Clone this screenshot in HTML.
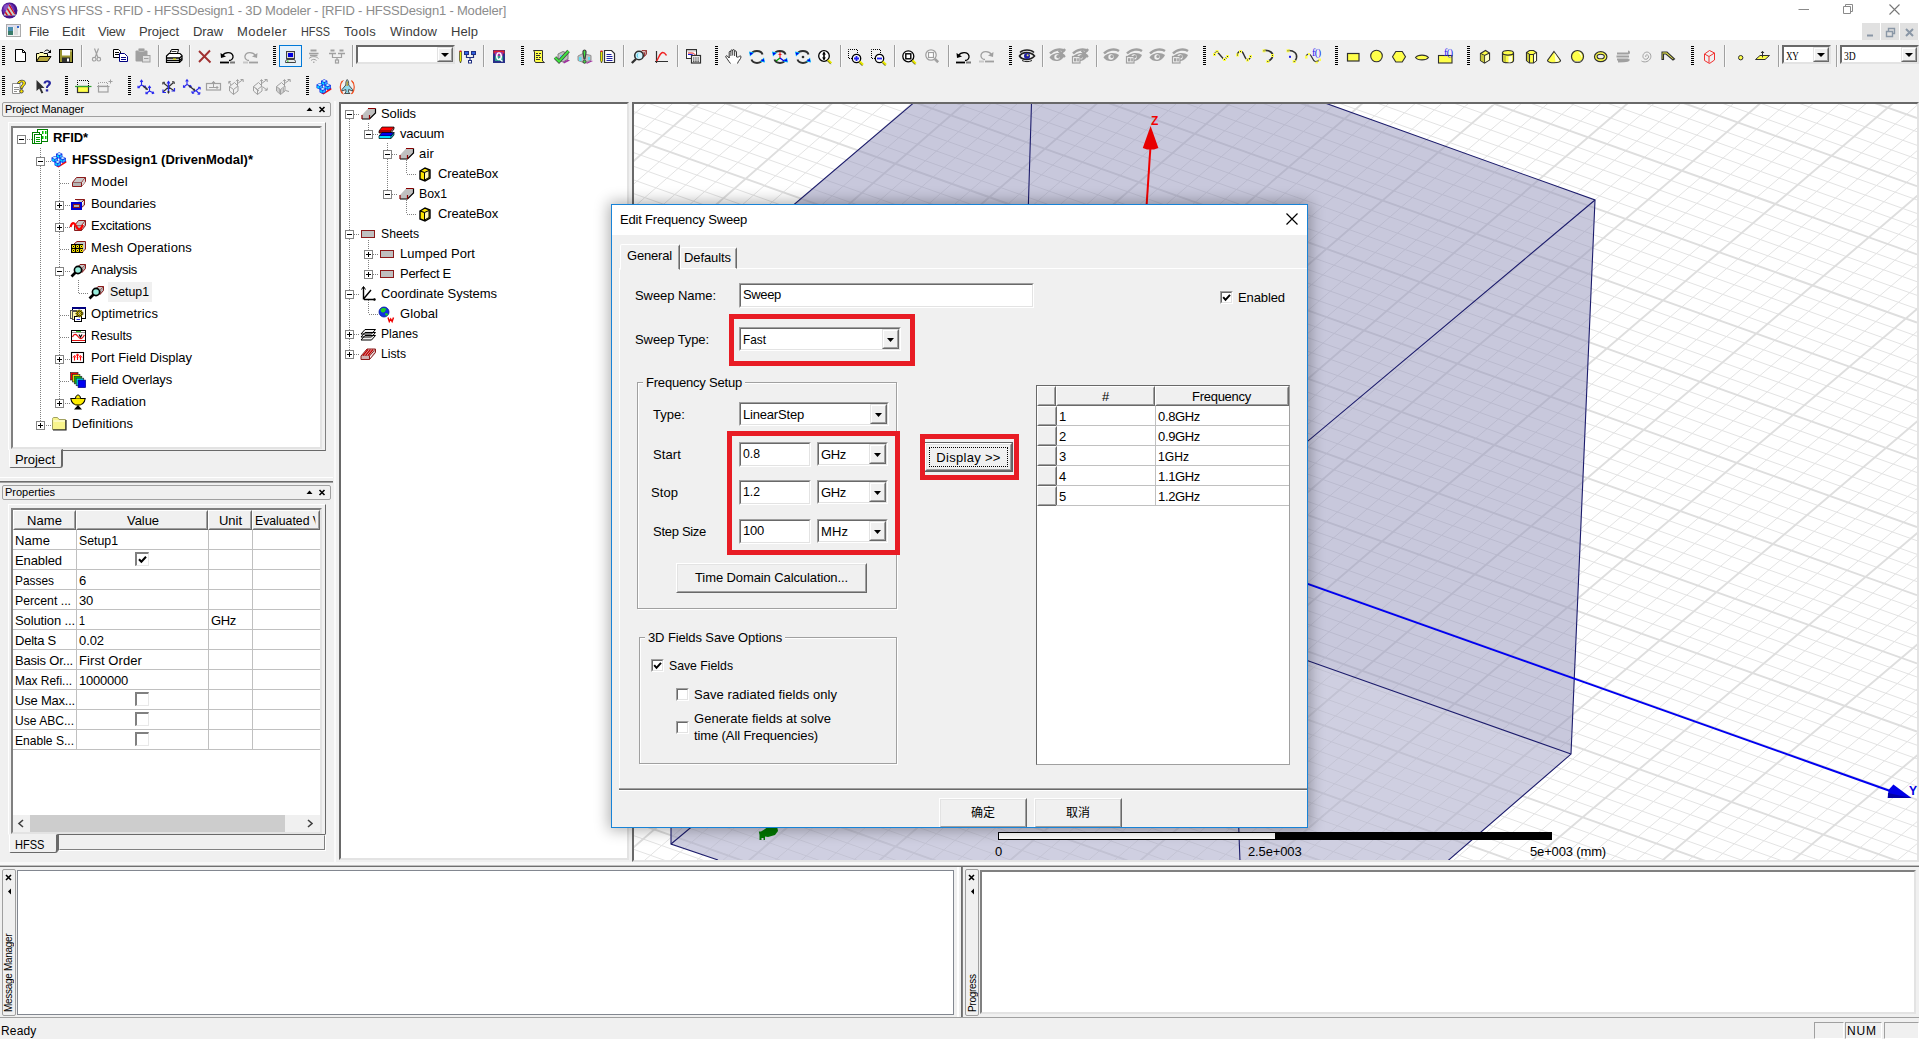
<!DOCTYPE html>
<html><head><meta charset="utf-8"><title>ANSYS HFSS</title><style>
html,body{margin:0;padding:0;}
body{width:1919px;height:1039px;position:relative;overflow:hidden;background:#f0f0f0;font-family:"Liberation Sans","Noto Sans CJK SC",sans-serif;font-size:13px;color:#000;}
div,svg{position:absolute;box-sizing:border-box;}
.t{white-space:nowrap;line-height:16px;}
.grip{width:3px;background:repeating-linear-gradient(to bottom,#000 0,#000 1px,transparent 1px,transparent 2px);}
.sep{width:1px;background:#a0a0a0;}
.sunk{border:1px solid;border-color:#a0a0a0 #fff #fff #a0a0a0;background:#fff;}
.sunk2{border:1px solid;border-color:#696969 #e3e3e3 #e3e3e3 #696969;}
.btn{border:1px solid;border-color:#fff #696969 #696969 #fff;background:#f0f0f0;}
.btn2{border:1px solid;border-color:#e3e3e3 #a0a0a0 #a0a0a0 #e3e3e3;}
</style></head><body>
<div style="left:0px;top:0px;width:1919px;height:22px;background:#fff;"></div>
<svg style="left:1px;top:2px;" width="17" height="17" viewBox="0 0 17 17"><defs><clipPath id="lg"><path d="M8.7 2L15 13.5H2.5Z"/></clipPath></defs><circle cx="8.5" cy="8.5" r="8" fill="#46148c"/><circle cx="7.6" cy="7.2" r="6" fill="#6a2eb0"/><circle cx="6.2" cy="5.6" r="3.2" fill="#9460cc" opacity=".7"/>
<g clip-path="url(#lg)"><rect x="0" y="0" width="17" height="17" fill="#c4d4cc"/><path d="M1 5L8 16 M4 3L11 14 M7 1L14 12 M10 0L17 11" stroke="#d81020" stroke-width="1.5" fill="none"/></g></svg>
<div class="t" style="left:22px;top:2px;line-height:18px;color:#8c8c8c;letter-spacing:-0.187px;">ANSYS HFSS - RFID - HFSSDesign1 - 3D Modeler - [RFID - HFSSDesign1 - Modeler]</div>
<svg style="left:1790px;top:0px;" width="129" height="22" viewBox="0 0 129 22"><path d="M8.5 9.5H19" stroke="#8a8a8a" stroke-width="1"/>
<path d="M53.5 6.5h7v7h-7z M55.5 6.5v-2h7v7h-2" stroke="#8a8a8a" fill="none" stroke-width="1"/>
<path d="M99.5 4.5l10 10M109.5 4.5l-10 10" stroke="#777" stroke-width="1.1"/></svg>
<div style="left:0px;top:22px;width:1919px;height:18px;background:#fff;"></div>
<svg style="left:6px;top:24px;" width="15" height="14" viewBox="0 0 15 14"><rect x="0.5" y="0.5" width="14" height="12" fill="#f4f4f4" stroke="#aaa"/><rect x="1" y="1" width="13" height="2" fill="#dde"/><rect x="2" y="3" width="5" height="8" fill="#3a7d6a"/><rect x="2" y="3" width="5" height="4" fill="#4a8fb0"/><rect x="8" y="3" width="4" height="8" fill="#ddd"/><rect x="11" y="2" width="2" height="2" fill="#36c"/></svg>
<div class="t" style="left:29px;top:23px;line-height:17px;color:#3c3c3c;letter-spacing:-0.237px;">File</div>
<div class="t" style="left:62px;top:23px;line-height:17px;color:#3c3c3c;letter-spacing:0.150px;">Edit</div>
<div class="t" style="left:98px;top:23px;line-height:17px;color:#3c3c3c;letter-spacing:-0.235px;">View</div>
<div class="t" style="left:139px;top:23px;line-height:17px;color:#3c3c3c;letter-spacing:-0.065px;">Project</div>
<div class="t" style="left:193px;top:23px;line-height:17px;color:#3c3c3c;letter-spacing:-0.084px;">Draw</div>
<div class="t" style="left:237px;top:23px;line-height:17px;color:#3c3c3c;letter-spacing:0.434px;">Modeler</div>
<div class="t" style="left:301px;top:23px;line-height:17px;color:#3c3c3c;transform:scaleX(0.8364);transform-origin:0 0;">HFSS</div>
<div class="t" style="left:344px;top:23px;line-height:17px;color:#3c3c3c;letter-spacing:0.331px;">Tools</div>
<div class="t" style="left:390px;top:23px;line-height:17px;color:#3c3c3c;letter-spacing:0.127px;">Window</div>
<div class="t" style="left:451px;top:23px;line-height:17px;color:#3c3c3c;letter-spacing:0.066px;">Help</div>
<div style="left:1862px;top:23px;width:18px;height:18px;background:#e1e1e1;"></div>
<div style="left:1881px;top:23px;width:18px;height:18px;background:#e1e1e1;"></div>
<div style="left:1900px;top:23px;width:18px;height:18px;background:#e1e1e1;"></div>
<svg style="left:1862px;top:23px;" width="56" height="18" viewBox="0 0 56 18"><path d="M5 12.5h6" stroke="#8a97a6" stroke-width="2"/>
<path d="M24.5 8.5h6v5h-6z M26.5 8v-2.5h6v5h-2" stroke="#8a97a6" fill="none" stroke-width="1.4"/>
<path d="M44 6l7 7M51 6l-7 7" stroke="#8a97a6" stroke-width="2"/></svg>
<div style="left:0px;top:40px;width:1919px;height:62px;background:#f0f0f0;"></div>
<div class="grip" style="left:2px;top:46px;width:3px;height:20px;"></div>
<svg style="left:15px;top:49px;overflow:visible;" width="12" height="14" viewBox="0 0 12 14"><path d="M0.5 0.5H7.5L10.5 3.5V12.5H0.5Z" fill="#fff" stroke="#000"/><path d="M7.5 0.5V3.5H10.5" fill="none" stroke="#000"/></svg>
<svg style="left:36px;top:49px;overflow:visible;" width="16" height="14" viewBox="0 0 16 14"><path d="M0.5 12.5V4.5H3L4 3.5H7L8 4.5H11.5V7.5" fill="#fffbb0" stroke="#000"/><path d="M0.5 12.5L3.5 7.5H15L11.5 12.5Z" fill="#b8a83c" stroke="#000"/><path d="M8.5 2.5C10 0.5 12.5 0.5 14 3" fill="none" stroke="#000"/><path d="M15 0.5V4H11.5Z" fill="#000"/></svg>
<svg style="left:59px;top:49px;overflow:visible;" width="15" height="15" viewBox="0 0 15 15"><rect x="0.5" y="0.5" width="13" height="13" fill="#9c9632" stroke="#000"/><rect x="3" y="1" width="8" height="5.5" fill="#fff"/><rect x="3" y="8.5" width="8" height="5" fill="#303030"/><rect x="8" y="9.5" width="2" height="3" fill="#fff"/><rect x="11.5" y="1.5" width="1" height="1" fill="#fff"/></svg>
<div class="sep" style="left:81px;top:45px;width:1px;height:22px;"></div>
<div style="left:82px;top:45px;width:1px;height:22px;background:#fff;opacity:.6;"></div>
<svg style="left:92px;top:48px;overflow:visible;" width="10" height="15" viewBox="0 0 10 15"><path d="M2.5 0.5L5.7 9M6.5 0.5L3.3 9" stroke="#a0a0a0" stroke-width="1.2" fill="none"/><circle cx="2.2" cy="11.2" r="1.8" fill="none" stroke="#a0a0a0" stroke-width="1.2"/><circle cx="6.8" cy="11.2" r="1.8" fill="none" stroke="#a0a0a0" stroke-width="1.2"/></svg>
<svg style="left:113px;top:49px;overflow:visible;" width="16" height="14" viewBox="0 0 16 14"><path d="M0.5 0.5H5.5L7.5 2.5V8.5H0.5Z" fill="#fff" stroke="#000"/><path d="M2 3.5h4M2 5.5h4" stroke="#000"/><path d="M6.5 4.5H11.5L14.5 7.5V12.5H6.5Z" fill="#fff" stroke="#000080"/><path d="M8 8.5h5M8 10.5h5" stroke="#000080"/></svg>
<svg style="left:135px;top:48px;overflow:visible;" width="16" height="15" viewBox="0 0 16 15"><rect x="0.5" y="2.5" width="12" height="11" rx="1" fill="#a0a0a0"/><rect x="3.5" y="0.5" width="6" height="3" rx="1" fill="#a0a0a0" stroke="#c0c0c0"/><rect x="7.5" y="7.5" width="7.5" height="6.5" fill="#e0e0e0" stroke="#a0a0a0"/><path d="M9 10.5h4.5" stroke="#a0a0a0"/></svg>
<div class="sep" style="left:158px;top:45px;width:1px;height:22px;"></div>
<div style="left:159px;top:45px;width:1px;height:22px;background:#fff;opacity:.6;"></div>
<svg style="left:166px;top:49px;overflow:visible;" width="17" height="15" viewBox="0 0 17 15"><path d="M3.5 4.5L5.5 0.5H12.5L11.5 4.5Z" fill="#fff" stroke="#000"/><path d="M5.5 2.5h5" stroke="#000" stroke-width=".8"/><path d="M0.5 7L3 4.5H14L16 6.5V11L13.5 13.5H0.5Z" fill="#fff" stroke="#000" stroke-width="1.2"/><path d="M0.5 9H13.5L16 7M0.5 11.5H13.5L16 9.5M13.5 9V13.5" stroke="#000" fill="none" stroke-width="1.3"/><rect x="7" y="9.5" width="3" height="1.2" fill="#e8e800"/></svg>
<div class="sep" style="left:189px;top:45px;width:1px;height:22px;"></div>
<div style="left:190px;top:45px;width:1px;height:22px;background:#fff;opacity:.6;"></div>
<svg style="left:198px;top:50px;overflow:visible;" width="14" height="14" viewBox="0 0 14 14"><path d="M1 1L12.5 12.5M12 0.5L1 12" stroke="#a03030" stroke-width="1.9" fill="none"/></svg>
<svg style="left:220px;top:51px;overflow:visible;" width="16" height="13" viewBox="0 0 16 13"><path d="M2.5 4.5C5 0.5 12 0.5 13 5C13.5 8 11 9.5 9 9.5" fill="none" stroke="#000" stroke-width="1.3"/><path d="M0.5 2L1 7L6 5.5Z" fill="#000"/><path d="M0 11.5H9" stroke="#000" stroke-width="1.8"/><path d="M10 11.5H15" stroke="#000" stroke-width="1.8" stroke-dasharray="1 1" stroke-dashoffset="0.5"/></svg>
<svg style="left:243px;top:51px;overflow:visible;" width="16" height="13" viewBox="0 0 16 13"><g transform="translate(15,0) scale(-1,1)"><path d="M2.5 4.5C5 0.5 12 0.5 13 5C13.5 8 11 9.5 9 9.5" fill="none" stroke="#a0a0a0" stroke-width="1.3"/><path d="M0.5 2L1 7L6 5.5Z" fill="#a0a0a0"/><path d="M0 11.5H9" stroke="#a0a0a0" stroke-width="1.8"/><path d="M10 11.5H15" stroke="#a0a0a0" stroke-width="1.8" stroke-dasharray="1 1" stroke-dashoffset="0.5"/></g></svg>
<div class="grip" style="left:273px;top:46px;width:3px;height:20px;"></div>
<div style="left:279px;top:45px;width:23px;height:22px;border:1px solid #0078d7;background:#e5f1fb;"></div>
<svg style="left:285px;top:51px;overflow:visible;" width="12" height="12" viewBox="0 0 12 12"><rect x="1.5" y="0.5" width="8" height="7" fill="#d8d8d8" stroke="#404040"/><rect x="3" y="2" width="5" height="4" fill="#0000e0"/><path d="M0.5 10.5L1.5 8.5H9.5L10.5 10.5V11.5H0.5Z" fill="#e8e8e8" stroke="#404040"/><rect x="2" y="9.6" width="1.5" height="1" fill="#00c000"/></svg>
<svg style="left:308px;top:49px;overflow:visible;" width="12" height="15" viewBox="0 0 12 15"><rect x="2.5" y="0.5" width="6" height="2" fill="#a0a0a0"/><path d="M1 4.5H10.5M2 6.5H9.5" stroke="#a0a0a0" stroke-width="1.4"/><path d="M1 9.5C3.5 7 8 7 10.5 9.5M3 11.5C4.5 10 7 10 8.5 11.5" fill="none" stroke="#a0a0a0"/><rect x="5.2" y="12.5" width="1.2" height="1.5" fill="#a0a0a0"/></svg>
<svg style="left:329px;top:49px;overflow:visible;" width="16" height="15" viewBox="0 0 16 15"><rect x="1.5" y="0.5" width="4" height="2" fill="#a0a0a0"/><rect x="10.5" y="0.5" width="4" height="2" fill="#a0a0a0"/><path d="M0 4.5H7M9 4.5H16" stroke="#a0a0a0" stroke-width="1.5"/><path d="M3.5 5V8.5H12.5V5M8 8.5V11" fill="none" stroke="#a0a0a0" stroke-width="1.2"/><rect x="6.5" y="11" width="3" height="3" fill="none" stroke="#a0a0a0" stroke-width="1.2"/></svg>
<div class="sep" style="left:352px;top:45px;width:1px;height:22px;"></div>
<div style="left:353px;top:45px;width:1px;height:22px;background:#fff;opacity:.6;"></div>
<div style="left:356px;top:45px;width:99px;height:19px;border:2px solid;border-color:#696969 #e3e3e3 #e3e3e3 #696969;background:#fff;"></div>
<div style="left:437px;top:47px;width:16px;height:15px;border:1px solid;border-color:#e3e3e3 #696969 #696969 #e3e3e3;background:#f0f0f0;"></div>
<div style="left:438px;top:48px;width:14px;height:13px;border:1px solid;border-color:#fff #a0a0a0 #a0a0a0 #fff;"></div>
<svg style="left:437px;top:47px;" width="16" height="15" viewBox="0 0 16 15"><path d="M4 6h8l-4 4z" fill="#000"/></svg>
<svg style="left:459px;top:50px;overflow:visible;" width="18" height="14" viewBox="0 0 18 14"><path d="M0.5 1.5h2v9l-1 2.5l-1 -2.5z" fill="#e8e800" stroke="#000" stroke-width=".5"/><rect x="0.5" y="0.5" width="2" height="1.5" fill="#e02020"/><rect x="5.5" y="1.5" width="4" height="3" fill="#3060e0" stroke="#203080"/><rect x="12.5" y="1.5" width="4" height="3" fill="#3060e0" stroke="#203080"/><path d="M7.5 5V7.5H14.5V5M11 7.5V10" fill="none" stroke="#203080" stroke-width="1.2"/><rect x="9.5" y="10.5" width="3" height="2.5" fill="#fff" stroke="#203080"/></svg>
<div class="sep" style="left:483px;top:45px;width:1px;height:22px;"></div>
<div style="left:484px;top:45px;width:1px;height:22px;background:#fff;opacity:.6;"></div>
<svg style="left:493px;top:50px;overflow:visible;" width="13" height="14" viewBox="0 0 13 14"><rect x="0" y="0" width="12" height="13" fill="#283088"/><rect x="0.5" y="0.5" width="11" height="3" fill="#e02030"/><rect x="2" y="2" width="8" height="9" fill="#a030a0"/><rect x="2" y="6" width="8" height="5" fill="#30a090"/><path d="M6 2.2C3.8 2.2 3 4 3 6.2S3.8 10.3 6 10.3S9 8.5 9 6.2S8.2 2.2 6 2.2ZM6 3.6C7 3.6 7.4 4.8 7.4 6.2S7 8.9 6 8.9S4.6 7.6 4.6 6.2S5 3.6 6 3.6Z" fill="#fff"/><path d="M6 8.5L9.5 11.5" stroke="#fff" stroke-width="1.4"/></svg>
<div class="grip" style="left:521px;top:46px;width:3px;height:20px;"></div>
<svg style="left:533px;top:50px;overflow:visible;" width="13" height="14" viewBox="0 0 13 14"><path d="M0.5 0.5H9.5V11L11.5 12.5H2.5L1.5 11V2Z" fill="#ffff4a" stroke="#303030"/><path d="M3 3.5h2M6 3.5h2M3 5.5h4M3 7.5h2M6 7.5h2M3 9.5h4" stroke="#303030"/></svg>
<svg style="left:554px;top:50px;overflow:visible;" width="17" height="14" viewBox="0 0 17 14"><path d="M4 4L9 1.5L14 3.5V9L9 12L4 10Z" fill="#c0c0c0" stroke="#808080"/><path d="M6 5h4v5h-4z" fill="#60e0f0"/><path d="M9 12L14 9.5L16 10.5L10 13.5Z" fill="#a030a0"/><path d="M1 7.5L5 11.5L14.5 1" fill="none" stroke="#404040" stroke-width="3.4"/><path d="M1 7.5L5 11.5L14.5 1" fill="none" stroke="#40e040" stroke-width="2"/></svg>
<svg style="left:577px;top:49px;overflow:visible;" width="17" height="15" viewBox="0 0 17 15"><path d="M1 7L6 4.5L14 6.5V11L8 14L1 11.5Z" fill="#c0c0c0" stroke="#909090"/><path d="M2 8h2.5v4h-2.5zM11 8h2v3h-2z" fill="#60e0f0"/><path d="M9 14L14 11.5L16 12L10 14.8Z" fill="#a030a0"/><path d="M7.5 1C5.8 1 5.8 3 6.2 5L7 10H8L8.8 5C9.2 3 9.2 1 7.5 1Z" fill="#40e040" stroke="#404040" stroke-width="1.2"/><circle cx="7.5" cy="12.7" r="1.5" fill="#40e040" stroke="#404040"/></svg>
<svg style="left:600px;top:50px;overflow:visible;" width="16" height="14" viewBox="0 0 16 14"><path d="M0.5 1.5h2v9l-1 2.5l-1 -2.5z" fill="#e8e800" stroke="#000" stroke-width=".5"/><rect x="0.5" y="0.5" width="2" height="1.5" fill="#e02020"/><path d="M4.5 0.5H11.5L14.5 3.5V12.5H4.5Z" fill="#fff" stroke="#303030" stroke-width="1.2"/><path d="M6.5 4.5h5M6.5 6.5h6M6.5 8.5h6M6.5 10.5h6" stroke="#2020a0"/></svg>
<div class="sep" style="left:623px;top:45px;width:1px;height:22px;"></div>
<div style="left:624px;top:45px;width:1px;height:22px;background:#fff;opacity:.6;"></div>
<svg style="left:631px;top:50px;overflow:visible;" width="16" height="14" viewBox="0 0 16 14"><path d="M9 3L11 0.5H15.5L13.5 3Z" fill="#e0c0c0" stroke="#8b1a1a" stroke-width=".8"/><path d="M13.5 3V6.5L15.5 4V0.5" fill="#c0a0a0" stroke="#8b1a1a" stroke-width=".8"/><circle cx="8" cy="5.5" r="4.3" fill="#d0f4ff" stroke="#303030" stroke-width="1.6"/><path d="M7 3.5C6 4.5 6 6.5 7 7.5" fill="none" stroke="#30c0e0"/><path d="M5 9L0.8 13" stroke="#303030" stroke-width="2.4"/></svg>
<svg style="left:655px;top:51px;overflow:visible;" width="14" height="13" viewBox="0 0 14 13"><path d="M1.5 0V12M0 10.5H13" stroke="#303030" stroke-width="1.2"/><path d="M1.5 10C4 7 4.5 2 7.5 1.5C9.5 1.2 10.5 3 11.5 4.5" fill="none" stroke="#f02020" stroke-width="1.4"/></svg>
<div class="sep" style="left:677px;top:45px;width:1px;height:22px;"></div>
<div style="left:678px;top:45px;width:1px;height:22px;background:#fff;opacity:.6;"></div>
<svg style="left:686px;top:49px;overflow:visible;" width="16" height="15" viewBox="0 0 16 15"><rect x="0.5" y="0.5" width="10" height="9" fill="#fff" stroke="#303030"/><rect x="1" y="1" width="9" height="1.5" fill="#c0c0c0"/><path d="M2 4H6C8 4 9 5 9.5 7" fill="none" stroke="#e02020"/><path d="M2 5.5H5C7 5.5 8 6.5 8.5 8" fill="none" stroke="#2020e0"/><rect x="5.5" y="6.5" width="9" height="7.5" fill="#fff" stroke="#303030" stroke-width="1.2"/><path d="M7 9h6M7 11h6M7 12.7h6" stroke="#303030" stroke-dasharray="1.5 .7"/></svg>
<div class="grip" style="left:715px;top:46px;width:3px;height:20px;"></div>
<svg style="left:725px;top:49px;overflow:visible;" width="17" height="16" viewBox="0 0 17 16"><path d="M5.5 14.5C3.5 12 2 9.5 0.8 8C0.3 7 1.5 6.3 2.3 7L4.2 9V3.2C4.2 2 5.8 2 5.9 3.2V1.8C5.9 0.5 7.6 0.5 7.7 1.8V1.5C7.8 0.2 9.5 0.3 9.6 1.6V2.6C9.8 1.5 11.3 1.6 11.4 2.8L11.6 8C14 9 15.5 5 16 8C16 10 13 12 12.5 14.5" fill="#fff" stroke="#303030" stroke-width="1"/><path d="M5.9 3.2V7M7.7 1.8V6.5M9.6 2.6V7" stroke="#303030" stroke-width=".9"/></svg>
<svg style="left:749px;top:49px;overflow:visible;" width="16" height="16" viewBox="0 0 16 16"><path d="M2.5 5C4 1 12 1 13.5 5.5" fill="none" stroke="#303030" stroke-width="2"/><path d="M13.5 10.5C12 15 4 15 2.5 10.5" fill="none" stroke="#303030" stroke-width="2"/><path d="M0 2.5L5 3.5L1 7.5Z" fill="#00c8ff"/><path d="M0.5 3.5L4 4L1.5 6.5Z" fill="#0000f0"/><path d="M16 13.5L11 12.5L15 8.5Z" fill="#00c8ff"/><path d="M15.5 12.5L12 12L14.5 9.5Z" fill="#0000f0"/></svg>
<svg style="left:772px;top:49px;overflow:visible;" width="16" height="16" viewBox="0 0 16 16"><path d="M2.5 5C4 1 12 1 13.5 5.5" fill="none" stroke="#303030" stroke-width="2"/><path d="M13.5 10.5C12 15 4 15 2.5 10.5" fill="none" stroke="#303030" stroke-width="2"/><path d="M0 2.5L5 3.5L1 7.5Z" fill="#00c8ff"/><path d="M0.5 3.5L4 4L1.5 6.5Z" fill="#0000f0"/><path d="M16 13.5L11 12.5L15 8.5Z" fill="#00c8ff"/><path d="M15.5 12.5L12 12L14.5 9.5Z" fill="#0000f0"/><path d="M8 3V9" stroke="#f02020" stroke-width="1.2"/><path d="M6.5 5.5h3" stroke="#f02020"/><path d="M8 9L4 12" stroke="#00a000" stroke-width="1.3"/><path d="M8 9L12 12" stroke="#0000f0" stroke-width="1.3"/></svg>
<svg style="left:795px;top:49px;overflow:visible;" width="16" height="16" viewBox="0 0 16 16"><path d="M2.5 5C4 1 12 1 13.5 5.5" fill="none" stroke="#303030" stroke-width="2"/><path d="M13.5 10.5C12 15 4 15 2.5 10.5" fill="none" stroke="#303030" stroke-width="2"/><path d="M0 2.5L5 3.5L1 7.5Z" fill="#00c8ff"/><path d="M0.5 3.5L4 4L1.5 6.5Z" fill="#0000f0"/><path d="M16 13.5L11 12.5L15 8.5Z" fill="#00c8ff"/><path d="M15.5 12.5L12 12L14.5 9.5Z" fill="#0000f0"/><circle cx="8" cy="8" r="1.3" fill="#303030"/></svg>
<svg style="left:818px;top:50px;overflow:visible;" width="16" height="15" viewBox="0 0 16 15"><circle cx="6" cy="6" r="5.3" fill="#fff" stroke="#000" stroke-width="1.3"/><path d="M9.975 9.975l3.3 3.3" stroke="#e8e800" stroke-width="2.4"/><path d="M9.375 10.875l3.3 3.3" stroke="#000" stroke-width=".6"/><path d="M6 2.2V9.8" stroke="#000" stroke-width="1.6"/><path d="M4 4.5L6 2L8 4.5ZM4 7.5L6 10L8 7.5Z" fill="#000"/></svg>
<div class="sep" style="left:840px;top:45px;width:1px;height:22px;"></div>
<div style="left:841px;top:45px;width:1px;height:22px;background:#fff;opacity:.6;"></div>
<svg style="left:847px;top:49px;overflow:visible;" width="18" height="16" viewBox="0 0 18 16"><rect x="1.5" y="0.5" width="9" height="9" fill="none" stroke="#000" stroke-dasharray="1 1" stroke-dashoffset="0.5"/><circle cx="9.5" cy="9.5" r="4.2" fill="#fff" stroke="#000" stroke-width="1.3"/><path d="M12.65 12.65l3.3 3.3" stroke="#e8e800" stroke-width="2.4"/><path d="M12.05 13.55l3.3 3.3" stroke="#000" stroke-width=".6"/><path d="M7 9.5h5M9.5 7v5" stroke="#2020f0" stroke-width="1.8"/></svg>
<svg style="left:870px;top:49px;overflow:visible;" width="18" height="16" viewBox="0 0 18 16"><rect x="1.5" y="0.5" width="9" height="9" fill="none" stroke="#000" stroke-dasharray="1 1" stroke-dashoffset="0.5"/><circle cx="9.5" cy="9.5" r="4.2" fill="#fff" stroke="#000" stroke-width="1.3"/><path d="M12.65 12.65l3.3 3.3" stroke="#e8e800" stroke-width="2.4"/><path d="M12.05 13.55l3.3 3.3" stroke="#000" stroke-width=".6"/><path d="M7 9.5h5" stroke="#2020f0" stroke-width="1.8"/></svg>
<div class="sep" style="left:894px;top:45px;width:1px;height:22px;"></div>
<div style="left:895px;top:45px;width:1px;height:22px;background:#fff;opacity:.6;"></div>
<svg style="left:902px;top:50px;overflow:visible;" width="17" height="15" viewBox="0 0 17 15"><circle cx="6.3" cy="6.3" r="5.5" fill="#fff" stroke="#000" stroke-width="1.3"/><path d="M10.425 10.425l3.3 3.3" stroke="#e8e800" stroke-width="2.4"/><path d="M9.825000000000001 11.325000000000001l3.3 3.3" stroke="#000" stroke-width=".6"/><rect x="3.8" y="3.8" width="5" height="5" fill="none" stroke="#000" stroke-width="1.4"/></svg>
<svg style="left:925px;top:49px;overflow:visible;" width="17" height="15" viewBox="0 0 17 15"><circle cx="6" cy="6" r="5.2" fill="#fff" stroke="#a0a0a0" stroke-width="1.3"/><path d="M9.9 9.9l3.3 3.3" stroke="#a0a0a0" stroke-width="2.4"/><path d="M9.3 10.8l3.3 3.3" stroke="#a0a0a0" stroke-width=".6"/><rect x="3.5" y="3.5" width="5" height="5" fill="none" stroke="#a0a0a0" stroke-width="1.2"/></svg>
<div class="sep" style="left:948px;top:45px;width:1px;height:22px;"></div>
<div style="left:949px;top:45px;width:1px;height:22px;background:#fff;opacity:.6;"></div>
<svg style="left:956px;top:51px;overflow:visible;" width="16" height="13" viewBox="0 0 16 13"><path d="M2.5 4.5C5 0.5 12 0.5 13 5C13.5 8 11 9.5 9 9.5" fill="none" stroke="#000" stroke-width="1.3"/><path d="M0.5 2L1 7L6 5.5Z" fill="#000"/><path d="M0 11.5H9" stroke="#000" stroke-width="1.8"/><path d="M10 11.5H15" stroke="#000" stroke-width="1.8" stroke-dasharray="1 1" stroke-dashoffset="0.5"/></svg>
<svg style="left:979px;top:50px;overflow:visible;" width="16" height="13" viewBox="0 0 16 13"><g transform="translate(15,0) scale(-1,1)"><path d="M2.5 4.5C5 0.5 12 0.5 13 5C13.5 8 11 9.5 9 9.5" fill="none" stroke="#a0a0a0" stroke-width="1.3"/><path d="M0.5 2L1 7L6 5.5Z" fill="#a0a0a0"/><path d="M0 11.5H9" stroke="#a0a0a0" stroke-width="1.8"/><path d="M10 11.5H15" stroke="#a0a0a0" stroke-width="1.8" stroke-dasharray="1 1" stroke-dashoffset="0.5"/></g></svg>
<div class="grip" style="left:1009px;top:46px;width:3px;height:20px;"></div>
<svg style="left:1019px;top:48px;overflow:visible;" width="16" height="16" viewBox="0 0 16 16"><path d="M0.5 8C3 3.5 12 3.5 15.5 8C12 12.5 3 12.5 0.5 8Z" fill="none" stroke="#202020" stroke-width="1.6"/><path d="M1 4.5C4 1.2 12 1.2 15 4.5" fill="none" stroke="#202020" stroke-width="1.4"/><circle cx="8" cy="8" r="3" fill="#2020a0"/><circle cx="8.6" cy="7.2" r="1" fill="#e8e060"/><path d="M3 12.5C6 14 10 14 13 12.5" fill="none" stroke="#202020" stroke-width="1"/></svg>
<div class="sep" style="left:1042px;top:45px;width:1px;height:22px;"></div>
<div style="left:1043px;top:45px;width:1px;height:22px;background:#fff;opacity:.6;"></div>
<svg style="left:1049px;top:48px;overflow:visible;" width="17" height="16" viewBox="0 0 17 16"><path d="M0.5 9.5C3 4.5 12 3.5 16 7C13.5 13.5 4.5 15.5 0.5 9.5Z" fill="#a0a0a0"/><path d="M1 5.5C5 1 12.5 0.5 16 3" fill="none" stroke="#a0a0a0" stroke-width="2.4"/><circle cx="8" cy="9" r="2.7" fill="#f0f0f0"/><circle cx="8.8" cy="8.5" r="1.5" fill="#a0a0a0"/><path d="M9.5 2.5L16 9M16 1L8.5 10" stroke="#a0a0a0" stroke-width="2.2"/></svg>
<svg style="left:1072px;top:48px;overflow:visible;" width="17" height="16" viewBox="0 0 17 16"><path d="M0.5 9.5C3 4.5 12 3.5 16 7C13.5 13.5 4.5 15.5 0.5 9.5Z" fill="#a0a0a0"/><path d="M1 5.5C5 1 12.5 0.5 16 3" fill="none" stroke="#a0a0a0" stroke-width="2.4"/><circle cx="8" cy="9" r="2.7" fill="#f0f0f0"/><circle cx="8.8" cy="8.5" r="1.5" fill="#a0a0a0"/><path d="M9.5 2.5L16 9M16 1L8.5 10" stroke="#a0a0a0" stroke-width="2.2"/><rect x="0.5" y="8.5" width="7.5" height="6.5" fill="#f0f0f0" stroke="#a0a0a0" stroke-width="1.2"/><rect x="2" y="10.2" width="2.4" height="3.2" fill="#a0a0a0"/><rect x="5.2" y="10.2" width="1.6" height="3.2" fill="#a0a0a0"/></svg>
<div class="sep" style="left:1096px;top:45px;width:1px;height:22px;"></div>
<div style="left:1097px;top:45px;width:1px;height:22px;background:#fff;opacity:.6;"></div>
<svg style="left:1103px;top:48px;overflow:visible;" width="17" height="16" viewBox="0 0 17 16"><path d="M0.5 9.5C3 4.5 12 3.5 16 7C13.5 13.5 4.5 15.5 0.5 9.5Z" fill="#a0a0a0"/><path d="M1 5.5C5 1 12.5 0.5 16 3" fill="none" stroke="#a0a0a0" stroke-width="2.4"/><circle cx="8" cy="9" r="2.7" fill="#f0f0f0"/><circle cx="8.8" cy="8.5" r="1.5" fill="#a0a0a0"/></svg>
<svg style="left:1126px;top:48px;overflow:visible;" width="17" height="16" viewBox="0 0 17 16"><path d="M0.5 9.5C3 4.5 12 3.5 16 7C13.5 13.5 4.5 15.5 0.5 9.5Z" fill="#a0a0a0"/><path d="M1 5.5C5 1 12.5 0.5 16 3" fill="none" stroke="#a0a0a0" stroke-width="2.4"/><circle cx="8" cy="9" r="2.7" fill="#f0f0f0"/><circle cx="8.8" cy="8.5" r="1.5" fill="#a0a0a0"/><rect x="0.5" y="8.5" width="7.5" height="6.5" fill="#f0f0f0" stroke="#a0a0a0" stroke-width="1.2"/><rect x="2" y="10.2" width="2.4" height="3.2" fill="#a0a0a0"/><rect x="5.2" y="10.2" width="1.6" height="3.2" fill="#a0a0a0"/></svg>
<svg style="left:1149px;top:48px;overflow:visible;" width="17" height="16" viewBox="0 0 17 16"><path d="M0.5 9.5C3 4.5 12 3.5 16 7C13.5 13.5 4.5 15.5 0.5 9.5Z" fill="#a0a0a0"/><path d="M1 5.5C5 1 12.5 0.5 16 3" fill="none" stroke="#a0a0a0" stroke-width="2.4"/><circle cx="8" cy="9" r="2.7" fill="#f0f0f0"/><circle cx="8.8" cy="8.5" r="1.5" fill="#a0a0a0"/></svg>
<svg style="left:1172px;top:48px;overflow:visible;" width="17" height="16" viewBox="0 0 17 16"><path d="M0.5 9.5C3 4.5 12 3.5 16 7C13.5 13.5 4.5 15.5 0.5 9.5Z" fill="#a0a0a0"/><path d="M1 5.5C5 1 12.5 0.5 16 3" fill="none" stroke="#a0a0a0" stroke-width="2.4"/><circle cx="8" cy="9" r="2.7" fill="#f0f0f0"/><circle cx="8.8" cy="8.5" r="1.5" fill="#a0a0a0"/><rect x="0.5" y="8.5" width="7.5" height="6.5" fill="#f0f0f0" stroke="#a0a0a0" stroke-width="1.2"/><rect x="2" y="10.2" width="2.4" height="3.2" fill="#a0a0a0"/><rect x="5.2" y="10.2" width="1.6" height="3.2" fill="#a0a0a0"/></svg>
<div class="grip" style="left:1203px;top:46px;width:3px;height:20px;"></div>
<svg style="left:1213px;top:50px;overflow:visible;" width="17" height="12" viewBox="0 0 17 12"><path d="M1 4L4 1.5L11 9.5L15 6.5" fill="none" stroke="#303030" stroke-width="1.3"/><rect x="0.0" y="3.0" width="3" height="3" fill="#ffff4a"/><rect x="1.0" y="4.0" width="1" height="1" fill="#303030"/><rect x="2.5" y="0.0" width="3" height="3" fill="#ffff4a"/><rect x="3.5" y="1.0" width="1" height="1" fill="#303030"/><rect x="10.0" y="8.0" width="3" height="3" fill="#ffff4a"/><rect x="11.0" y="9.0" width="1" height="1" fill="#303030"/><rect x="13.0" y="5.0" width="3" height="3" fill="#ffff4a"/><rect x="14.0" y="6.0" width="1" height="1" fill="#303030"/></svg>
<svg style="left:1236px;top:50px;overflow:visible;" width="17" height="12" viewBox="0 0 17 12"><path d="M1 5C3 0 6 0 8 5S12.5 12 15 6" fill="none" stroke="#303030" stroke-width="1.4"/><rect x="0.0" y="3.5" width="3" height="3" fill="#ffff4a"/><rect x="1.0" y="4.5" width="1" height="1" fill="#303030"/><rect x="3.0" y="0.0" width="3" height="3" fill="#ffff4a"/><rect x="4.0" y="1.0" width="1" height="1" fill="#303030"/><rect x="10.0" y="8.5" width="3" height="3" fill="#ffff4a"/><rect x="11.0" y="9.5" width="1" height="1" fill="#303030"/><rect x="13.0" y="5.0" width="3" height="3" fill="#ffff4a"/><rect x="14.0" y="6.0" width="1" height="1" fill="#303030"/></svg>
<svg style="left:1262px;top:49px;overflow:visible;" width="13" height="14" viewBox="0 0 13 14"><path d="M2 1.5C8 1 11.5 4 10.5 7.5C10 10 8 11.5 5.5 12.5" fill="none" stroke="#303030" stroke-width="1.8"/><rect x="0.5" y="0.30000000000000004" width="3" height="3" fill="#ffff4a"/><rect x="1.5" y="1.3" width="1" height="1" fill="#303030"/><rect x="9.0" y="5.0" width="3" height="3" fill="#ffff4a"/><rect x="10.0" y="6.0" width="1" height="1" fill="#303030"/><rect x="4.3" y="11.0" width="3" height="3" fill="#ffff4a"/><rect x="5.3" y="12.0" width="1" height="1" fill="#303030"/></svg>
<svg style="left:1286px;top:49px;overflow:visible;" width="13" height="14" viewBox="0 0 13 14"><path d="M2 1.5C8 1 11.5 5 10.5 9C10 11 9 12 8 12.7" fill="none" stroke="#303030" stroke-width="1.5"/><rect x="0.5" y="0.30000000000000004" width="3" height="3" fill="#ffff4a"/><rect x="1.5" y="1.3" width="1" height="1" fill="#303030"/><rect x="6.699999999999999" y="11.0" width="3" height="3" fill="#ffff4a"/><rect x="7.699999999999999" y="12.0" width="1" height="1" fill="#303030"/><rect x="3" y="6.8" width="2" height="2" fill="#2020f0"/></svg>
<svg style="left:1305px;top:50px;overflow:visible;" width="17" height="14" viewBox="0 0 17 14"><path d="M0.5 8C2 2.5 5 3 7 7.5S11 13 15 9.5" fill="none" stroke="#303030" stroke-width="1.2"/><rect x="0" y="5.5" width="2.5" height="3" fill="#ffff4a"/><rect x="3" y="3" width="2" height="2" fill="#ffff4a"/><rect x="10.5" y="11.5" width="2.5" height="2" fill="#ffff4a"/><rect x="13.5" y="8.5" width="2.5" height="2.5" fill="#ffff4a"/></svg>
<div class="t" style="left:1312px;top:47px;font-size:10px;line-height:12px;color:#2020f0;font-family:'Liberation Serif',serif;letter-spacing:-0.5px;">f()</div>
<div class="grip" style="left:1335px;top:46px;width:3px;height:20px;"></div>
<svg style="left:1347px;top:53px;overflow:visible;" width="13" height="9" viewBox="0 0 13 9"><rect x="0.5" y="0.5" width="11.5" height="7.5" fill="#ffff4a" stroke="#303030" stroke-width="1.2"/></svg>
<svg style="left:1370px;top:50px;overflow:visible;" width="14" height="13" viewBox="0 0 14 13"><circle cx="6.5" cy="6" r="5.8" fill="#ffff4a" stroke="#303030" stroke-width="1.1"/></svg>
<svg style="left:1392px;top:51px;overflow:visible;" width="15" height="12" viewBox="0 0 15 12"><path d="M0.5 5.7L3.8 0.5H10.2L13.5 5.7L10.2 11H3.8Z" fill="#ffff4a" stroke="#303030" stroke-width="1.1"/></svg>
<svg style="left:1415px;top:54px;overflow:visible;" width="15" height="7" viewBox="0 0 15 7"><path d="M0.5 3.5C3 0.3 11 0.3 13.5 3.5C11 6.7 3 6.7 0.5 3.5Z" fill="#ffff4a" stroke="#303030" stroke-width="1.1"/></svg>
<svg style="left:1438px;top:55px;overflow:visible;" width="15" height="9" viewBox="0 0 15 9"><rect x="0.5" y="0.5" width="13.5" height="7.5" fill="#ffff4a" stroke="#303030" stroke-width="1.1"/></svg>
<div class="t" style="left:1444px;top:47px;font-size:10px;line-height:12px;color:#2020f0;font-family:'Liberation Serif',serif;letter-spacing:-0.5px;">f()</div>
<div class="grip" style="left:1467px;top:46px;width:3px;height:20px;"></div>
<svg style="left:1480px;top:50px;overflow:visible;" width="11" height="14" viewBox="0 0 11 14"><path d="M0.5 3.5L5.5 0.5L9.5 3V10L4.5 13L0.5 10.5Z" fill="#ffff4a" stroke="#303030" stroke-width="1.2"/><path d="M4.5 5.5L9 3.3V9.8L4.5 12.5Z" fill="#ffffc8"/><path d="M0.5 3.5L4.5 5.5L9.5 3M4.5 5.5V13" fill="none" stroke="#303030" stroke-width="1.1"/><path d="M0.7 4L4.2 5.8V12.4L0.7 10.2Z" fill="#c8c83a"/></svg>
<svg style="left:1502px;top:50px;overflow:visible;" width="13" height="14" viewBox="0 0 13 14"><path d="M0.5 2.8V10.5C0.5 13.5 11.5 13.5 11.5 10.5V2.8" fill="#ffff4a" stroke="#303030" stroke-width="1.2"/><ellipse cx="6" cy="2.8" rx="5.5" ry="2.3" fill="#ffff4a" stroke="#303030" stroke-width="1.2"/><path d="M1 5V10.5C1.5 11.5 3 12 4 12.3V6C3 5.8 1.5 5.5 1 5Z" fill="#c8c83a"/><path d="M6.5 6.5V12.5C8.5 12.5 9.5 12 10 11.5V6C9 6.3 8 6.5 6.5 6.5Z" fill="#ffffe0"/></svg>
<svg style="left:1526px;top:50px;overflow:visible;" width="12" height="14" viewBox="0 0 12 14"><path d="M0.5 2.5V10.5L3.5 13H7.5L10.5 10.5V2.5L7.5 0.5H3.5Z" fill="#ffff4a" stroke="#303030" stroke-width="1.2"/><path d="M0.5 2.5L3.5 4.5H7.5L10.5 2.5M3.5 4.5V13M7.5 4.5V13" fill="none" stroke="#303030" stroke-width="1.1"/><path d="M1 3.3L3 4.8V12.3L1 10.3Z" fill="#c8c83a"/><path d="M8 4.8L10 3.3V10.3L8 12.3Z" fill="#ffffe0"/></svg>
<svg style="left:1547px;top:51px;overflow:visible;" width="15" height="13" viewBox="0 0 15 13"><path d="M7 0.5L13.5 9.5C13.5 12.5 0.5 12.5 0.5 9.5Z" fill="#ffff4a" stroke="#303030" stroke-width="1.1"/><path d="M7.3 1.5L12.5 9.3C12 10.3 10 10.8 8.5 11Z" fill="#ffffe0"/></svg>
<svg style="left:1571px;top:50px;overflow:visible;" width="14" height="14" viewBox="0 0 14 14"><circle cx="6.5" cy="6.5" r="6" fill="#ffff4a" stroke="#303030" stroke-width="1.2"/><path d="M2 10.5C4 12.8 9 12.8 11 10.5C9 11.5 4 11.5 2 10.5Z" fill="#a0a0a0"/><path d="M7 2C10 2 11.5 5 10.5 8C10 5 9 3.5 7 2Z" fill="#fff"/></svg>
<svg style="left:1594px;top:51px;overflow:visible;" width="14" height="12" viewBox="0 0 14 12"><ellipse cx="6.7" cy="5.7" rx="6.2" ry="5" fill="#ffff4a" stroke="#303030" stroke-width="1.2"/><ellipse cx="6.7" cy="5.5" rx="3.6" ry="2.3" fill="#f0f0f0" stroke="#303030" stroke-width="1.1"/></svg>
<svg style="left:1616px;top:51px;overflow:visible;" width="14" height="12" viewBox="0 0 14 12"><path d="M1 2.5H12C13.5 2.5 13.5 0.5 12 0.5M0.5 5.5H13M1 8.5H12.5M12.5 8.5C13.5 9.5 12 10.5 2 10.5" fill="none" stroke="#a0a0a0" stroke-width="1.8"/></svg>
<svg style="left:1640px;top:50px;overflow:visible;" width="12" height="13" viewBox="0 0 12 13"><path d="M6 7C5 6 6 4.5 7.5 5C9 5.5 9 8 7 9C4.5 10 2.5 8 3 5.5C3.5 2.5 7 1 9.5 3C12 5.5 11 10 7 11.5C5 12.2 3 12 1.5 11" fill="none" stroke="#a0a0a0" stroke-width="1"/></svg>
<svg style="left:1661px;top:51px;overflow:visible;" width="15" height="10" viewBox="0 0 15 10"><path d="M1 1H6L13.5 8L12 9L5 3H2.5V8.5H1Z" fill="#ffff4a" stroke="#303030" stroke-width="1.1"/></svg>
<div class="grip" style="left:1691px;top:46px;width:3px;height:20px;"></div>
<svg style="left:1704px;top:50px;overflow:visible;" width="11" height="14" viewBox="0 0 11 14"><path d="M0.5 4L5.5 0.5L10.5 3V10L5.5 13.5L0.5 10.5Z" fill="none" stroke="#f03030"/><path d="M0.5 4L5 6.5L10.5 3M5 6.5V13" fill="none" stroke="#f03030"/></svg>
<div class="sep" style="left:1724px;top:45px;width:1px;height:22px;"></div>
<div style="left:1725px;top:45px;width:1px;height:22px;background:#fff;opacity:.6;"></div>
<svg style="left:1738px;top:55px;overflow:visible;" width="6" height="6" viewBox="0 0 6 6"><circle cx="2.7" cy="2.7" r="2.2" fill="#ffff4a" stroke="#303030" stroke-width="1"/></svg>
<svg style="left:1755px;top:51px;overflow:visible;" width="16" height="10" viewBox="0 0 16 10"><path d="M0.5 8.5L5 4.5H14.5L10 8.5Z" fill="#ffff4a" stroke="#303030" stroke-width="1"/><path d="M7.5 6.5V0.5M6 2L7.5 0.3L9 2" fill="none" stroke="#303030" stroke-width="1"/></svg>
<div class="sep" style="left:1778px;top:45px;width:1px;height:22px;"></div>
<div style="left:1779px;top:45px;width:1px;height:22px;background:#fff;opacity:.6;"></div>
<div style="left:1782px;top:45px;width:49px;height:19px;border:2px solid;border-color:#696969 #e3e3e3 #e3e3e3 #696969;background:#fff;"></div>
<div style="left:1813px;top:47px;width:16px;height:15px;border:1px solid;border-color:#e3e3e3 #696969 #696969 #e3e3e3;background:#f0f0f0;"></div>
<div style="left:1814px;top:48px;width:14px;height:13px;border:1px solid;border-color:#fff #a0a0a0 #a0a0a0 #fff;"></div>
<svg style="left:1813px;top:47px;" width="16" height="15" viewBox="0 0 16 15"><path d="M4 6h8l-4 4z" fill="#000"/></svg>
<div class="t" style="left:1786px;top:49px;font-size:12px;line-height:15px;font-family:'Liberation Serif','Noto Serif CJK SC',serif;letter-spacing:-0.6px;transform:scaleX(0.76);transform-origin:0 0;">XY</div>
<div class="sep" style="left:1836px;top:45px;width:1px;height:22px;"></div>
<div style="left:1837px;top:45px;width:1px;height:22px;background:#fff;opacity:.6;"></div>
<div style="left:1840px;top:45px;width:79px;height:19px;border:2px solid;border-color:#696969 #e3e3e3 #e3e3e3 #696969;background:#fff;"></div>
<div style="left:1901px;top:47px;width:16px;height:15px;border:1px solid;border-color:#e3e3e3 #696969 #696969 #e3e3e3;background:#f0f0f0;"></div>
<div style="left:1902px;top:48px;width:14px;height:13px;border:1px solid;border-color:#fff #a0a0a0 #a0a0a0 #fff;"></div>
<svg style="left:1901px;top:47px;" width="16" height="15" viewBox="0 0 16 15"><path d="M4 6h8l-4 4z" fill="#000"/></svg>
<div class="t" style="left:1844px;top:49px;font-size:12px;line-height:15px;font-family:'Liberation Serif','Noto Serif CJK SC',serif;letter-spacing:0px;transform:scaleX(0.8);transform-origin:0 0;">3D</div>
<div class="grip" style="left:2px;top:76px;width:3px;height:20px;"></div>
<svg style="left:12px;top:79px;overflow:visible;" width="16" height="16" viewBox="0 0 16 16"><path d="M0.5 4.5H8V14.5H0.5Z" fill="#fff" stroke="#909090"/><path d="M2 8.5h5M2 10.5h5M2 12.5h3" stroke="#909090"/><path d="M5.5 4.5C5.5 0.5 13.5 0 13.5 4C13.5 6.5 10.5 7 10.5 9.5H8.5C8.5 6 11 6 11 4C11 2.5 8 2.5 8 4.5Z" fill="#ffe800" stroke="#404040" stroke-width=".9"/><circle cx="9.5" cy="12.3" r="1.7" fill="#ffe800" stroke="#404040" stroke-width=".9"/></svg>
<svg style="left:36px;top:79px;overflow:visible;" width="16" height="16" viewBox="0 0 16 16"><path d="M0.5 1V12L3.2 9.5L5.5 14.5L7.3 13.7L5 9H8.5Z" fill="#303030"/><path d="M7.5 4.5C7.5 0.5 15 0 15 4C15 6.5 12 7 12 9H10C10 6 12.5 6 12.5 4C12.5 2.8 9.8 2.8 9.8 4.5Z" fill="#2828a0"/><rect x="9.8" y="10.3" width="2.4" height="2.2" fill="#2828a0"/></svg>
<div class="grip" style="left:65px;top:76px;width:3px;height:20px;"></div>
<svg style="left:75px;top:80px;overflow:visible;" width="17" height="14" viewBox="0 0 17 14"><rect x="2.5" y="0.5" width="11" height="6" fill="none" stroke="#000" stroke-dasharray="1 1" stroke-dashoffset="0.5"/><rect x="2.5" y="6.5" width="11" height="6" fill="#ffff4a" stroke="#303030" stroke-width="1.2"/><path d="M0 6.5H16.5" stroke="#30a030" stroke-width="1.2"/></svg>
<svg style="left:97px;top:79px;overflow:visible;" width="17" height="15" viewBox="0 0 17 15"><rect x="1.5" y="3.5" width="9" height="3.5" fill="none" stroke="#a0a0a0" stroke-dasharray="1 1" stroke-dashoffset="0.5"/><rect x="1.5" y="7.5" width="9.5" height="5.5" fill="none" stroke="#a0a0a0" stroke-width="1.2"/><path d="M0 7.5H12.5" stroke="#a0a0a0"/><path d="M11.5 2.5h4M13.5 0.5v4" stroke="#a0a0a0"/></svg>
<div class="grip" style="left:128px;top:76px;width:3px;height:20px;"></div>
<svg style="left:137px;top:80px;overflow:visible;" width="18" height="15" viewBox="0 0 18 15"><g transform="translate(4.5,5) scale(1)" stroke="#2828f0" fill="none" stroke-width="1.1"><path d="M0 0V-4.5M0 0L-3.5 2.5M0 0L4 2"/><path d="M-1.3 -3L0 -4.8L1.3 -3M-3.5 0.8V2.6H-1.7M2.3 2.8L4.2 2.1L3.3 0.4"/></g><g transform="translate(12.5,11) scale(1)" stroke="#2828f0" fill="none" stroke-width="1.1"><path d="M0 0V-4.5M0 0L-3.5 2.5M0 0L4 2"/><path d="M-1.3 -3L0 -4.8L1.3 -3M-3.5 0.8V2.6H-1.7M2.3 2.8L4.2 2.1L3.3 0.4"/></g><path d="M6 6L10.5 9.5" stroke="#303030" stroke-width="1.3"/><path d="M11 10L8 9.3L9.8 7.3Z" fill="#303030"/></svg>
<svg style="left:162px;top:80px;overflow:visible;" width="14" height="15" viewBox="0 0 14 15"><path d="M6.5 13V1M6.5 7L1 12M6.5 7L12.5 11M6.5 7L1.5 3M6.5 7L11.5 2.5" stroke="#303030" stroke-width="1.1"/><path d="M6.5 11V2" stroke="#2828f0" stroke-width="1.4"/><path d="M4.5 3.5L6.5 0.5L8.5 3.5Z" fill="#2828f0"/><path d="M1 9.5V12.5H4M12.5 8V11H9.5" fill="none" stroke="#2828f0" stroke-width="1.2"/><path d="M5 11.5L6.5 14L8 11.5Z" fill="#303030"/><path d="M0.8 4.5V2.3H3M10 1.8H12.2V4" fill="none" stroke="#303030"/></svg>
<svg style="left:183px;top:80px;overflow:visible;" width="18" height="15" viewBox="0 0 18 15"><g transform="translate(4,4.5) scale(1)" stroke="#2828f0" fill="none" stroke-width="1.1"><path d="M0 0V-4.5M0 0L-3.5 2.5M0 0L4 2"/><path d="M-1.3 -3L0 -4.8L1.3 -3M-3.5 0.8V2.6H-1.7M2.3 2.8L4.2 2.1L3.3 0.4"/></g><path d="M5.5 5.5L12 10.5" stroke="#303030" stroke-width="1.3"/><path d="M12.5 11L9.5 10.3L11.3 8.3Z" fill="#303030"/><path d="M13 10.5L17 7.5M13 10.5L9 13M13 10.5L16.5 14" stroke="#2828f0" stroke-width="1.1"/><path d="M15 7.3H17.2V9.5M9 11V13.2H11.2M16.8 12V14.2H14.5" fill="none" stroke="#2828f0"/></svg>
<svg style="left:206px;top:81px;overflow:visible;" width="16" height="10" viewBox="0 0 16 10"><rect x="0.5" y="2.5" width="14" height="6.5" fill="none" stroke="#a0a0a0" stroke-width="1.2"/><path d="M7.5 6.5V0.5M6 2L7.5 0.3L9 2M3 6.5H12M10.5 5L12 6.5L10.5 8" fill="none" stroke="#a0a0a0"/></svg>
<svg style="left:228px;top:79px;overflow:visible;" width="17" height="16" viewBox="0 0 17 16"><path d="M1.5 7.5L6.5 3.5L10 7V12L5.5 15.5L1.5 12Z M1.5 7.5L5.5 10.5L10 7M5.5 10.5V15.5" fill="none" stroke="#a0a0a0"/><path d="M9 5L15 0.5M12.5 0.5H15.2V3M9.5 6V1M8 2.3L9.5 0.5L11 2.3" fill="none" stroke="#a0a0a0"/><path d="M3 6L1 2.5M0.5 4.5L1 2.3L3 2.8" fill="none" stroke="#a0a0a0"/></svg>
<svg style="left:252px;top:79px;overflow:visible;" width="17" height="16" viewBox="0 0 17 16"><path d="M1.5 7.5L6.5 3.5L10 7V12L5.5 15.5L1.5 12Z M1.5 7.5L5.5 10.5L10 7M5.5 10.5V15.5" fill="none" stroke="#a0a0a0"/><path d="M9 5L15 0.5M12.5 0.5H15.2V3M9.5 6V1M8 2.3L9.5 0.5L11 2.3" fill="none" stroke="#a0a0a0"/><path d="M11 8L15 11M15.2 8.7V11.2H12.7" fill="none" stroke="#a0a0a0"/><path d="M3.5 9.5L7 12" stroke="#a0a0a0"/></svg>
<svg style="left:275px;top:79px;overflow:visible;" width="17" height="16" viewBox="0 0 17 16"><path d="M1.5 7.5L6.5 3.5L10 7V12L5.5 15.5L1.5 12Z M1.5 7.5L5.5 10.5L10 7M5.5 10.5V15.5" fill="none" stroke="#a0a0a0"/><path d="M9 5L15 0.5M12.5 0.5H15.2V3M9.5 6V1M8 2.3L9.5 0.5L11 2.3" fill="none" stroke="#a0a0a0"/><path d="M3 9V13M4.5 10V14M7 10V14M8.5 9V13" stroke="#a0a0a0" stroke-width=".8"/><path d="M10.5 11.5L14 12.5" stroke="#a0a0a0"/></svg>
<div class="grip" style="left:306px;top:76px;width:3px;height:20px;"></div>
<svg style="left:316px;top:79px;overflow:visible;" width="17" height="16" viewBox="0 0 17 16"><g transform="translate(0,0)"><path d="M4 13.5L7.5 15.5L15.5 10.5L15 8.5L9 13Z" fill="#f01010"/><path d="M5 1.8L8.2 0.3L11.4 1.8V5.2L8.2 6.8L5 5.2Z" fill="#1028e8"/><path d="M5.7 2.7L8 3.8V6.1L5.7 4.9Z" fill="#00d8ff"/><path d="M8.6 3.8L10.8 2.7V4.9L8.6 6Z" fill="#30b8ff"/><path d="M5.9 1.9L8.2 0.8L10.5 1.9L8.2 3.1Z" fill="#c0f8ff"/><path d="M0.5 5.6L3.7 4.1L6.9 5.6V9.0L3.7 10.6L0.5 9.0Z" fill="#1028e8"/><path d="M1.2 6.5L3.5 7.6V9.899999999999999L1.2 8.7Z" fill="#00d8ff"/><path d="M4.1 7.6L6.3 6.5V8.7L4.1 9.8Z" fill="#30b8ff"/><path d="M1.4 5.699999999999999L3.7 4.6L6.0 5.699999999999999L3.7 6.9Z" fill="#c0f8ff"/><path d="M8.5 6.0L11.7 4.5L14.9 6.0V9.4L11.7 11.0L8.5 9.4Z" fill="#1028e8"/><path d="M9.2 6.9L11.5 8.0V10.3L9.2 9.100000000000001Z" fill="#00d8ff"/><path d="M12.1 8.0L14.3 6.9V9.100000000000001L12.1 10.2Z" fill="#30b8ff"/><path d="M9.4 6.1L11.7 5.0L14.0 6.1L11.7 7.300000000000001Z" fill="#c0f8ff"/><path d="M3.5 9.8L6.7 8.3L9.9 9.8V13.2L6.7 14.8L3.5 13.2Z" fill="#1028e8"/><path d="M4.2 10.7L6.5 11.8V14.1L4.2 12.9Z" fill="#00d8ff"/><path d="M7.1 11.8L9.3 10.7V12.9L7.1 14Z" fill="#30b8ff"/><path d="M4.4 9.9L6.7 8.8L9.0 9.9L6.7 11.1Z" fill="#c0f8ff"/></g></svg>
<svg style="left:339px;top:79px;overflow:visible;" width="17" height="16" viewBox="0 0 17 16"><path d="M3.5 2C0.5 5 0.5 11 3.5 14.5M13 2C16 5 16 11 13 14.5" fill="none" stroke="#f05020" stroke-width="1.2"/><path d="M2 3.5L4.5 1.5M2 13L4.5 15M14.5 3.5L12 1.5M14.5 13L12 15" stroke="#f05020"/><path d="M8.2 0.5C6.8 2 6.8 4 6.8 6L3 10.5V12L6.8 10.5L7 13L5.5 14.5H11L9.5 13L9.7 10.5L13.5 12V10.5L9.7 6C9.7 4 9.7 2 8.2 0.5Z" fill="#90d8e8" stroke="#404040" stroke-width=".9"/><path d="M8.2 2.5V7" stroke="#c0a030" stroke-width="1.4"/></svg>
<div style="left:2px;top:102px;width:329px;height:15px;border:1px solid #a0a0a0;border-radius:2px;background:#f0f0f0;"></div>
<div class="t" style="left:5px;top:102px;font-size:11px;line-height:15px;letter-spacing:-0.113px;">Project Manager</div>
<svg style="left:305px;top:105px;" width="24" height="9" viewBox="0 0 24 9"><path d="M1.5 6L4.5 2.5L7.5 6Z" fill="#000"/><path d="M14.5 2l5 5M19.5 2l-5 5" stroke="#000" stroke-width="1.6"/></svg>
<div style="left:8px;top:122px;width:318px;height:329px;border:1px solid;border-color:#fff #808080 #696969 #fff;"></div>
<div style="left:11px;top:126px;width:311px;height:323px;border:2px solid;border-color:#808080 #e3e3e3 #e3e3e3 #808080;background:#fff;"></div>
<svg style="left:0px;top:0px;" width="333" height="481" viewBox="0 0 333 481"><g transform="translate(0,1)"><path d="M40.5 147V424" stroke="#808080" stroke-width="1" stroke-dasharray="1 1"/><path d="M59.5 169V402" stroke="#808080" stroke-width="1" stroke-dasharray="1 1"/><path d="M78.5 279V292" stroke="#808080" stroke-width="1" stroke-dasharray="1 1"/><path d="M27 138.5H32" stroke="#808080" stroke-width="1" stroke-dasharray="1 1"/><path d="M46 160.5H51" stroke="#808080" stroke-width="1" stroke-dasharray="1 1"/><path d="M60 182.5H70" stroke="#808080" stroke-width="1" stroke-dasharray="1 1"/><path d="M60 248.5H70" stroke="#808080" stroke-width="1" stroke-dasharray="1 1"/><path d="M60 314.5H70" stroke="#808080" stroke-width="1" stroke-dasharray="1 1"/><path d="M60 336.5H70" stroke="#808080" stroke-width="1" stroke-dasharray="1 1"/><path d="M60 380.5H70" stroke="#808080" stroke-width="1" stroke-dasharray="1 1"/><path d="M65 204.5H70" stroke="#808080" stroke-width="1" stroke-dasharray="1 1"/><path d="M65 226.5H70" stroke="#808080" stroke-width="1" stroke-dasharray="1 1"/><path d="M65 270.5H70" stroke="#808080" stroke-width="1" stroke-dasharray="1 1"/><path d="M65 358.5H70" stroke="#808080" stroke-width="1" stroke-dasharray="1 1"/><path d="M65 402.5H70" stroke="#808080" stroke-width="1" stroke-dasharray="1 1"/><path d="M79 292.5H88" stroke="#808080" stroke-width="1" stroke-dasharray="1 1"/><path d="M46 424.5H51" stroke="#808080" stroke-width="1" stroke-dasharray="1 1"/><rect x="17.5" y="134.5" width="8" height="8" fill="#fff" stroke="#848484"/><path d="M19 138.5h5" stroke="#000"/><rect x="36.5" y="156.5" width="8" height="8" fill="#fff" stroke="#848484"/><path d="M38 160.5h5" stroke="#000"/><rect x="55.5" y="200.5" width="8" height="8" fill="#fff" stroke="#848484"/><path d="M57 204.5h5" stroke="#000"/><path d="M59.5 202v5" stroke="#000"/><rect x="55.5" y="222.5" width="8" height="8" fill="#fff" stroke="#848484"/><path d="M57 226.5h5" stroke="#000"/><path d="M59.5 224v5" stroke="#000"/><rect x="55.5" y="354.5" width="8" height="8" fill="#fff" stroke="#848484"/><path d="M57 358.5h5" stroke="#000"/><path d="M59.5 356v5" stroke="#000"/><rect x="55.5" y="398.5" width="8" height="8" fill="#fff" stroke="#848484"/><path d="M57 402.5h5" stroke="#000"/><path d="M59.5 400v5" stroke="#000"/><rect x="55.5" y="266.5" width="8" height="8" fill="#fff" stroke="#848484"/><path d="M57 270.5h5" stroke="#000"/><rect x="36.5" y="420.5" width="8" height="8" fill="#fff" stroke="#848484"/><path d="M38 424.5h5" stroke="#000"/><path d="M40.5 422v5" stroke="#000"/></g><g transform="translate(31,129)"><rect x="6.5" y="0.5" width="10" height="12" fill="#fff" stroke="#008000"/><rect x="11" y="2" width="1.5" height="3" fill="#00c000"/><rect x="14" y="2" width="1.5" height="3" fill="#00c000"/><rect x="10.5" y="7" width="2" height="3" fill="#00c000"/><rect x="14" y="7" width="1.5" height="3" fill="#00c000"/><rect x="1.5" y="3.5" width="7" height="11" fill="#fff" stroke="#008000"/><rect x="3.5" y="5.5" width="7" height="9" fill="#fff" stroke="#008000"/><path d="M5 8.5h4M5 10.5h4M5 12.5h4" stroke="#00a000"/></g><g transform="translate(51,152)"><path d="M4 13.5L7.5 15.5L15.5 10.5L15 8.5L9 13Z" fill="#f01010"/><path d="M5 1.8L8.2 0.3L11.4 1.8V5.2L8.2 6.8L5 5.2Z" fill="#1028e8"/><path d="M5.7 2.7L8 3.8V6.1L5.7 4.9Z" fill="#00d8ff"/><path d="M8.6 3.8L10.8 2.7V4.9L8.6 6Z" fill="#30b8ff"/><path d="M5.9 1.9L8.2 0.8L10.5 1.9L8.2 3.1Z" fill="#c0f8ff"/><path d="M0.5 5.6L3.7 4.1L6.9 5.6V9.0L3.7 10.6L0.5 9.0Z" fill="#1028e8"/><path d="M1.2 6.5L3.5 7.6V9.899999999999999L1.2 8.7Z" fill="#00d8ff"/><path d="M4.1 7.6L6.3 6.5V8.7L4.1 9.8Z" fill="#30b8ff"/><path d="M1.4 5.699999999999999L3.7 4.6L6.0 5.699999999999999L3.7 6.9Z" fill="#c0f8ff"/><path d="M8.5 6.0L11.7 4.5L14.9 6.0V9.4L11.7 11.0L8.5 9.4Z" fill="#1028e8"/><path d="M9.2 6.9L11.5 8.0V10.3L9.2 9.100000000000001Z" fill="#00d8ff"/><path d="M12.1 8.0L14.3 6.9V9.100000000000001L12.1 10.2Z" fill="#30b8ff"/><path d="M9.4 6.1L11.7 5.0L14.0 6.1L11.7 7.300000000000001Z" fill="#c0f8ff"/><path d="M3.5 9.8L6.7 8.3L9.9 9.8V13.2L6.7 14.8L3.5 13.2Z" fill="#1028e8"/><path d="M4.2 10.7L6.5 11.8V14.1L4.2 12.9Z" fill="#00d8ff"/><path d="M7.1 11.8L9.3 10.7V12.9L7.1 14Z" fill="#30b8ff"/><path d="M4.4 9.9L6.7 8.8L9.0 9.9L6.7 11.1Z" fill="#c0f8ff"/></g><g transform="translate(71,174)"><path d="M1.5 8.5L5.5 3.5H14.5L10.5 8.5Z" fill="#c8c8c8" stroke="#8b1a1a"/><path d="M1.5 8.5V12.5H10.5V8.5M10.5 12.5L14.5 7.5V3.5" fill="#a8a8a8" stroke="#8b1a1a"/><path d="M2 9h8v3h-8z" fill="#b4b4b4"/><path d="M11 12l3-4v-3.5l-3 4z" fill="#d8d8d8"/></g><g transform="translate(70,196)"><path d="M5 3.5H14.5L11 7" fill="#c8c8c8" stroke="#8b1a1a"/><path d="M14.5 3.5V9L11 12" fill="#c8c8c8" stroke="#8b1a1a"/><rect x="1" y="6" width="11" height="8" fill="#0000d0"/><rect x="3.5" y="8.5" width="6" height="3" fill="#b0b0b0" stroke="#8b1a1a"/></g><g transform="translate(70,218)"><path d="M4.5 7.5L8.5 2.5H15.5L11.5 7.5Z" fill="#c8c8c8" stroke="#8b1a1a"/><path d="M4.5 7.5V12.5H11.5V7.5M11.5 12.5L15.5 7.5V2.5" fill="#b0b0b0" stroke="#8b1a1a"/><path d="M0.5 9C2 4 4 4 6 8S10 13 13 7" fill="none" stroke="#f00" stroke-width="2.2"/></g><g transform="translate(70,240)"><path d="M4 4L7 1.5H15.5V9L12.5 12" fill="#c8c8c8" stroke="#8b1a1a"/><rect x="1" y="4" width="12" height="9" fill="#000"/><rect x="2" y="5" width="3" height="3" rx="1" fill="#ffe800"/><rect x="3" y="6" width="1" height="1" fill="#000"/><rect x="2" y="9" width="3" height="3" rx="1" fill="#ffe800"/><rect x="3" y="10" width="1" height="1" fill="#000"/><rect x="6" y="5" width="3" height="3" rx="1" fill="#ffe800"/><rect x="7" y="6" width="1" height="1" fill="#000"/><rect x="6" y="9" width="3" height="3" rx="1" fill="#ffe800"/><rect x="7" y="10" width="1" height="1" fill="#000"/><rect x="10" y="5" width="3" height="3" rx="1" fill="#ffe800"/><rect x="11" y="6" width="1" height="1" fill="#000"/><rect x="10" y="9" width="3" height="3" rx="1" fill="#ffe800"/><rect x="11" y="10" width="1" height="1" fill="#000"/></g><g transform="translate(70,262)"><path d="M6.5 6.5L10 2.5H15.5L12 6.5Z" fill="#c8c8c8" stroke="#8b1a1a"/><path d="M12 6.5V10.5L15.5 6.5V2.5" fill="#b0b0b0" stroke="#8b1a1a"/><circle cx="8" cy="8" r="3.6" fill="#9ed" stroke="#000" stroke-width="1.6"/><path d="M5.5 10.5L1.5 14.5" stroke="#000" stroke-width="2.6"/></g><g transform="translate(88,284)"><path d="M6.5 6.5L10 2.5H15.5L12 6.5Z" fill="#c8c8c8" stroke="#8b1a1a"/><path d="M12 6.5V10.5L15.5 6.5V2.5" fill="#b0b0b0" stroke="#8b1a1a"/><circle cx="8" cy="8" r="3.6" fill="#9ed" stroke="#000" stroke-width="1.6"/><path d="M5.5 10.5L1.5 14.5" stroke="#000" stroke-width="2.6"/></g><g transform="translate(70,306)"><rect x="2.5" y="1.5" width="13" height="11" fill="#fff" stroke="#000"/><rect x="2" y="1" width="14" height="2" fill="#000080"/><rect x="0.5" y="4.5" width="6" height="8" fill="#fff8b0" stroke="#555"/><rect x="2.5" y="5.5" width="5" height="8" fill="#fff8b0" stroke="#555"/><rect x="4.5" y="10.5" width="7" height="5" fill="#fff" stroke="#000"/><path d="M6.5 13.5h3.5" stroke="#2020e0"/><circle cx="9.5" cy="7.5" r="3.4" fill="#ffe800" stroke="#000" stroke-dasharray="1.4 1"/><circle cx="9.5" cy="7.5" r="2.4" fill="#ffe800" stroke="#000" stroke-width=".8"/><circle cx="9.5" cy="7.5" r=".9" fill="#fff" stroke="#000" stroke-width=".6"/></g><g transform="translate(70,328)"><rect x="1.5" y="2.5" width="14" height="12" fill="#fff" stroke="#000"/><path d="M2 4.5h13" stroke="#909090"/><path d="M6 3.5h5" stroke="#30c030"/><path d="M2.5 9C4 5.5 6 5.5 8 8.5S12 11.5 14.5 7" fill="none" stroke="#e01010" stroke-width="1.2"/><path d="M2 12.5h13" stroke="#e01010"/><path d="M9 6.5l1.5 2.5l1.5-2.5" fill="none" stroke="#000" stroke-width="1.2"/></g><g transform="translate(70,350)"><rect x="1.5" y="2.5" width="12" height="10" fill="#fff" stroke="#000" stroke-width="1.1"/><path d="M4.5 10.5V6.5M7.5 10V4.5M10.5 10.5V6.5" stroke="#f00" stroke-width="1.1"/><path d="M3 7.5L4.5 5.5L6 7.5M6 5.8L7.5 3.8L9 5.8M9 7.5L10.5 5.5L12 7.5" fill="none" stroke="#f00" stroke-width="1"/></g><g transform="translate(70,372)"><rect x="0.5" y="0.5" width="7.5" height="7.5" fill="#f00000" stroke="#303030" stroke-width=".7"/><rect x="2.4" y="2.4" width="7.5" height="7.5" fill="#e8e800" stroke="#303030" stroke-width=".7"/><rect x="4.3" y="4.3" width="7.5" height="7.5" fill="#00c800" stroke="#303030" stroke-width=".7"/><rect x="6.199999999999999" y="6.199999999999999" width="7.5" height="7.5" fill="#00e0e8" stroke="#303030" stroke-width=".7"/><rect x="8.1" y="8.1" width="7.5" height="7.5" fill="#0000f0" stroke="#000080" stroke-width=".7"/></g><g transform="translate(70,394)"><path d="M0.8 4.5H15.2C14.5 9.5 11 11 8 11S1.5 9.5 0.8 4.5Z" fill="#ffee00" stroke="#000" stroke-width="1.1"/><path d="M3.5 9.5C5 10.8 11 10.8 12.5 9.5L10.5 11.5H5.5Z" fill="#807000"/><path d="M5.5 4.5C5.5 2 7 1 8 1S10.5 2 10.5 4.5" fill="#ffee00" stroke="#000" stroke-width="1"/><path d="M8 11L4 15.5H12Z" fill="#000"/></g><g transform="translate(51,416)"><path d="M1.5 3.5C1.5 2 2 1.5 3 1.5H6.5L8 3.5H14.5V13.5H1.5Z" fill="#f8f48c" stroke="#a0a060" stroke-width="1"/><path d="M15 4V14H2" fill="none" stroke="#202020" stroke-width="1.2"/><path d="M2.5 5H14" stroke="#fffff0" stroke-width="1"/></g></svg>
<div style="left:108px;top:282px;width:44px;height:20px;background:#f0f0f0;"></div>
<div class="t" style="left:53px;top:129px;line-height:18px;font-weight:bold;letter-spacing:-0.078px;">RFID*</div>
<div class="t" style="left:72px;top:151px;line-height:18px;font-weight:bold;letter-spacing:0.016px;">HFSSDesign1 (DrivenModal)*</div>
<div class="t" style="left:91px;top:173px;line-height:18px;letter-spacing:0.319px;">Model</div>
<div class="t" style="left:91px;top:195px;line-height:18px;letter-spacing:-0.076px;">Boundaries</div>
<div class="t" style="left:91px;top:217px;line-height:18px;letter-spacing:-0.260px;">Excitations</div>
<div class="t" style="left:91px;top:239px;line-height:18px;letter-spacing:0.134px;">Mesh Operations</div>
<div class="t" style="left:91px;top:261px;line-height:18px;letter-spacing:-0.301px;">Analysis</div>
<div class="t" style="left:110px;top:283px;line-height:18px;transform:scaleX(0.9466);transform-origin:0 0;">Setup1</div>
<div class="t" style="left:91px;top:305px;line-height:18px;letter-spacing:0.116px;">Optimetrics</div>
<div class="t" style="left:91px;top:327px;line-height:18px;transform:scaleX(0.9459);transform-origin:0 0;">Results</div>
<div class="t" style="left:91px;top:349px;line-height:18px;letter-spacing:-0.048px;">Port Field Display</div>
<div class="t" style="left:91px;top:371px;line-height:18px;letter-spacing:-0.148px;">Field Overlays</div>
<div class="t" style="left:91px;top:393px;line-height:18px;letter-spacing:0.009px;">Radiation</div>
<div class="t" style="left:72px;top:415px;line-height:18px;letter-spacing:0.028px;">Definitions</div>
<div style="left:8px;top:450px;width:1px;height:1px;background:#f0f0f0;"></div>
<div style="left:9px;top:449px;width:54px;height:19px;border:1px solid;border-color:transparent #696969 #696969 #fff;border-right-width:2px;border-radius:0 0 3px 2px;background:#f0f0f0;"></div>
<div class="t" style="left:15px;top:451px;line-height:17px;letter-spacing:-0.065px;">Project</div>
<div style="left:0px;top:477px;width:333px;height:1px;background:#fff;"></div>
<div style="left:0px;top:481px;width:333px;height:2px;background:#a0a0a0;border-top:1px solid #6d6d6d;"></div>
<div style="left:2px;top:485px;width:329px;height:15px;border:1px solid #a0a0a0;border-radius:2px;background:#f0f0f0;"></div>
<div class="t" style="left:5px;top:485px;font-size:11px;line-height:15px;letter-spacing:-0.013px;">Properties</div>
<svg style="left:305px;top:488px;" width="24" height="9" viewBox="0 0 24 9"><path d="M1.5 6L4.5 2.5L7.5 6Z" fill="#000"/><path d="M14.5 2l5 5M19.5 2l-5 5" stroke="#000" stroke-width="1.6"/></svg>
<div style="left:8px;top:504px;width:318px;height:331px;border:1px solid;border-color:#fff #696969 transparent #fff;"></div>
<div style="left:11px;top:508px;width:311px;height:326px;border:2px solid;border-color:#808080 #e3e3e3 #e3e3e3 #808080;background:#fff;"></div>
<div style="left:13px;top:510px;width:63px;height:20px;background:#f0f0f0;border:1px solid;border-color:#fff #696969 #696969 #fff;"></div>
<div style="left:14px;top:511px;width:61px;height:18px;border:1px solid;border-color:transparent #a0a0a0 #a0a0a0 transparent;"></div>
<div style="left:76px;top:510px;width:132px;height:20px;background:#f0f0f0;border:1px solid;border-color:#fff #696969 #696969 #fff;"></div>
<div style="left:77px;top:511px;width:130px;height:18px;border:1px solid;border-color:transparent #a0a0a0 #a0a0a0 transparent;"></div>
<div style="left:208px;top:510px;width:44px;height:20px;background:#f0f0f0;border:1px solid;border-color:#fff #696969 #696969 #fff;"></div>
<div style="left:209px;top:511px;width:42px;height:18px;border:1px solid;border-color:transparent #a0a0a0 #a0a0a0 transparent;"></div>
<div style="left:252px;top:510px;width:68px;height:20px;background:#f0f0f0;border:1px solid;border-color:#fff #696969 #696969 #fff;"></div>
<div style="left:253px;top:511px;width:66px;height:18px;border:1px solid;border-color:transparent #a0a0a0 #a0a0a0 transparent;"></div>
<div class="t" style="left:27px;top:512px;line-height:18px;letter-spacing:0.081px;">Name</div>
<div class="t" style="left:127px;top:512px;line-height:18px;letter-spacing:-0.057px;">Value</div>
<div class="t" style="left:219px;top:512px;line-height:18px;letter-spacing:-0.029px;">Unit</div>
<div class="t" style="left:255px;top:512px;line-height:18px;transform:scaleX(0.9415);transform-origin:0 0;clip-path:inset(0 6px 0 0);">Evaluated V</div>
<svg style="left:0px;top:0px;" width="333" height="860" viewBox="0 0 333 860"><path d="M13 549.5H320" stroke="#c0c0c0"/><path d="M13 569.5H320" stroke="#c0c0c0"/><path d="M13 589.5H320" stroke="#c0c0c0"/><path d="M13 609.5H320" stroke="#c0c0c0"/><path d="M13 629.5H320" stroke="#c0c0c0"/><path d="M13 649.5H320" stroke="#c0c0c0"/><path d="M13 669.5H320" stroke="#c0c0c0"/><path d="M13 689.5H320" stroke="#c0c0c0"/><path d="M13 709.5H320" stroke="#c0c0c0"/><path d="M13 729.5H320" stroke="#c0c0c0"/><path d="M13 749.5H320" stroke="#c0c0c0"/><path d="M76.5 529V749" stroke="#c0c0c0"/><path d="M208.5 529V749" stroke="#c0c0c0"/><path d="M252.5 529V749" stroke="#c0c0c0"/></svg>
<div class="t" style="left:15px;top:532px;line-height:18px;letter-spacing:0.081px;">Name</div>
<div class="t" style="left:79px;top:532px;line-height:18px;transform:scaleX(0.9466);transform-origin:0 0;">Setup1</div>
<div class="t" style="left:15px;top:552px;line-height:18px;letter-spacing:-0.101px;">Enabled</div>
<div class="t" style="left:15px;top:572px;line-height:18px;transform:scaleX(0.9149);transform-origin:0 0;">Passes</div>
<div class="t" style="left:79px;top:572px;line-height:18px;letter-spacing:-0.229px;">6</div>
<div class="t" style="left:15px;top:592px;line-height:18px;transform:scaleX(0.9452);transform-origin:0 0;">Percent ...</div>
<div class="t" style="left:79px;top:592px;line-height:18px;letter-spacing:-0.229px;">30</div>
<div class="t" style="left:15px;top:612px;line-height:18px;letter-spacing:-0.119px;">Solution ...</div>
<div class="t" style="left:79px;top:612px;line-height:18px;transform:scaleX(0.8300);transform-origin:0 0;">1</div>
<div class="t" style="left:15px;top:632px;line-height:18px;letter-spacing:-0.233px;">Delta S</div>
<div class="t" style="left:79px;top:632px;line-height:18px;letter-spacing:-0.075px;">0.02</div>
<div class="t" style="left:15px;top:652px;line-height:18px;letter-spacing:-0.178px;">Basis Or...</div>
<div class="t" style="left:79px;top:652px;line-height:18px;letter-spacing:0.081px;">First Order</div>
<div class="t" style="left:15px;top:672px;line-height:18px;transform:scaleX(0.9176);transform-origin:0 0;">Max Refi...</div>
<div class="t" style="left:79px;top:672px;line-height:18px;letter-spacing:-0.229px;">1000000</div>
<div class="t" style="left:15px;top:692px;line-height:18px;letter-spacing:-0.212px;">Use Max...</div>
<div class="t" style="left:15px;top:712px;line-height:18px;transform:scaleX(0.9280);transform-origin:0 0;">Use ABC...</div>
<div class="t" style="left:15px;top:732px;line-height:18px;transform:scaleX(0.9278);transform-origin:0 0;">Enable S...</div>
<div class="t" style="left:211px;top:612px;line-height:18px;letter-spacing:-0.333px;">GHz</div>
<div style="left:135px;top:552px;width:14px;height:14px;border:2px solid;border-color:#808080 #e8e8e8 #e8e8e8 #808080;border-right-width:1px;border-bottom-width:1px;background:#fff;"></div>
<div style="left:135px;top:692px;width:14px;height:14px;border:2px solid;border-color:#808080 #e8e8e8 #e8e8e8 #808080;border-right-width:1px;border-bottom-width:1px;background:#fff;"></div>
<div style="left:135px;top:712px;width:14px;height:14px;border:2px solid;border-color:#808080 #e8e8e8 #e8e8e8 #808080;border-right-width:1px;border-bottom-width:1px;background:#fff;"></div>
<div style="left:135px;top:732px;width:14px;height:14px;border:2px solid;border-color:#808080 #e8e8e8 #e8e8e8 #808080;border-right-width:1px;border-bottom-width:1px;background:#fff;"></div>
<svg style="left:136px;top:553px;" width="13" height="13" viewBox="0 0 13 13"><path d="M3 6.2l2.4 2.6L10 3.8" stroke="#000" stroke-width="2" fill="none"/></svg>
<div style="left:13px;top:815px;width:307px;height:17px;background:#f0f0f0;"></div>
<div style="left:30px;top:815px;width:255px;height:17px;background:#cdcdcd;"></div>
<svg style="left:13px;top:815px;" width="307" height="17" viewBox="0 0 307 17"><path d="M10 5l-4 3.5l4 3.5M295 5l4 3.5l-4 3.5" stroke="#404040" stroke-width="1.6" fill="none"/></svg>
<div style="left:58px;top:834px;width:268px;height:17px;border:1px solid;border-color:#696969 #fff #fff #696969;"></div>
<div style="left:59px;top:835px;width:266px;height:15px;border:1px solid;border-color:transparent #808080 #808080 transparent;"></div>
<div style="left:9px;top:834px;width:49px;height:19px;border:1px solid;border-color:transparent #696969 #696969 #fff;border-right-width:2px;border-radius:0 0 3px 2px;background:#f0f0f0;"></div>
<div class="t" style="left:15px;top:836px;line-height:17px;transform:scaleX(0.8508);transform-origin:0 0;">HFSS</div>
<div style="left:333px;top:101px;width:7px;height:760px;background:#f0f0f0;"></div>
<div style="left:334px;top:101px;width:2px;height:764px;background:#fafafa;"></div>
<div style="left:339px;top:102px;width:290px;height:758px;border:2px solid;border-color:#696969 #e3e3e3 #e3e3e3 #696969;background:#fff;"></div>
<svg style="left:0px;top:0px;" width="632" height="400" viewBox="0 0 632 400"><path d="M349.5 119V354" stroke="#808080" stroke-width="1" stroke-dasharray="1 1"/><path d="M368.5 123V130" stroke="#808080" stroke-width="1" stroke-dasharray="1 1"/><path d="M387.5 143V190" stroke="#808080" stroke-width="1" stroke-dasharray="1 1"/><path d="M406.5 160V174" stroke="#808080" stroke-width="1" stroke-dasharray="1 1"/><path d="M406.5 200V214" stroke="#808080" stroke-width="1" stroke-dasharray="1 1"/><path d="M368.5 240V274" stroke="#808080" stroke-width="1" stroke-dasharray="1 1"/><path d="M368.5 300V314" stroke="#808080" stroke-width="1" stroke-dasharray="1 1"/><path d="M354 114.5H359" stroke="#808080" stroke-width="1" stroke-dasharray="1 1"/><path d="M373 134.5H378" stroke="#808080" stroke-width="1" stroke-dasharray="1 1"/><path d="M392 154.5H397" stroke="#808080" stroke-width="1" stroke-dasharray="1 1"/><path d="M407 174.5H417" stroke="#808080" stroke-width="1" stroke-dasharray="1 1"/><path d="M392 194.5H397" stroke="#808080" stroke-width="1" stroke-dasharray="1 1"/><path d="M407 214.5H417" stroke="#808080" stroke-width="1" stroke-dasharray="1 1"/><path d="M354 234.5H359" stroke="#808080" stroke-width="1" stroke-dasharray="1 1"/><path d="M373 254.5H378" stroke="#808080" stroke-width="1" stroke-dasharray="1 1"/><path d="M373 274.5H378" stroke="#808080" stroke-width="1" stroke-dasharray="1 1"/><path d="M354 294.5H359" stroke="#808080" stroke-width="1" stroke-dasharray="1 1"/><path d="M369 314.5H378" stroke="#808080" stroke-width="1" stroke-dasharray="1 1"/><path d="M354 334.5H359" stroke="#808080" stroke-width="1" stroke-dasharray="1 1"/><path d="M354 354.5H359" stroke="#808080" stroke-width="1" stroke-dasharray="1 1"/><rect x="345.5" y="110.5" width="8" height="8" fill="#fff" stroke="#848484"/><path d="M347 114.5h5" stroke="#000"/><rect x="364.5" y="130.5" width="8" height="8" fill="#fff" stroke="#848484"/><path d="M366 134.5h5" stroke="#000"/><rect x="383.5" y="150.5" width="8" height="8" fill="#fff" stroke="#848484"/><path d="M385 154.5h5" stroke="#000"/><rect x="383.5" y="190.5" width="8" height="8" fill="#fff" stroke="#848484"/><path d="M385 194.5h5" stroke="#000"/><rect x="345.5" y="230.5" width="8" height="8" fill="#fff" stroke="#848484"/><path d="M347 234.5h5" stroke="#000"/><rect x="364.5" y="250.5" width="8" height="8" fill="#fff" stroke="#848484"/><path d="M366 254.5h5" stroke="#000"/><path d="M368.5 252v5" stroke="#000"/><rect x="364.5" y="270.5" width="8" height="8" fill="#fff" stroke="#848484"/><path d="M366 274.5h5" stroke="#000"/><path d="M368.5 272v5" stroke="#000"/><rect x="345.5" y="290.5" width="8" height="8" fill="#fff" stroke="#848484"/><path d="M347 294.5h5" stroke="#000"/><rect x="345.5" y="330.5" width="8" height="8" fill="#fff" stroke="#848484"/><path d="M347 334.5h5" stroke="#000"/><path d="M349.5 332v5" stroke="#000"/><rect x="345.5" y="350.5" width="8" height="8" fill="#fff" stroke="#848484"/><path d="M347 354.5h5" stroke="#000"/><path d="M349.5 352v5" stroke="#000"/><g transform="translate(361,106.5)"><path d="M7 2H14.5V6.5L8.5 12.5H1V8.5Z" fill="#c0c0c0"/><path d="M14.5 2V6.5L8.5 12.5H1" fill="none" stroke="#000" stroke-width="1.2"/><path d="M7 2H14.5M1 12.5V8.5M8.5 12.5V8.5" fill="none" stroke="#8b0000" stroke-width="1.2"/></g><g transform="translate(378,126)"><path d="M1 5L4 1H16L13 5Z" fill="#f00" stroke="#000" stroke-width=".7"/><path d="M1 5V7H13V5M13 7L16 3V1" fill="#a00" stroke="#000" stroke-width=".7"/><path d="M1 10L4 6.5H16L13 10Z" fill="#0000f0" stroke="#000" stroke-width=".7"/><path d="M1 10V12.5H13V10" fill="#00e0ff" stroke="#000" stroke-width=".7"/><path d="M13 12.5L16 9V6.5L13 10" fill="#00a0c0" stroke="#000" stroke-width=".7"/></g><g transform="translate(399,146.5)"><path d="M7 2H14.5V6.5L8.5 12.5H1V8.5Z" fill="#c0c0c0"/><path d="M14.5 2V6.5L8.5 12.5H1" fill="none" stroke="#000" stroke-width="1.2"/><path d="M7 2H14.5M1 12.5V8.5M8.5 12.5V8.5" fill="none" stroke="#8b0000" stroke-width="1.2"/></g><g transform="translate(418,166)"><path d="M2 5L7 2L12 4V12L7 15L2 13Z" fill="#ffe600" stroke="#000" stroke-width="1.4"/><path d="M6.5 6.5L11 4.5V11.5L6.5 14Z" fill="#fff8b0" stroke="#000" stroke-width="1"/><path d="M2 5L6.5 6.5" stroke="#000" stroke-width="1.2"/></g><g transform="translate(399,186.5)"><path d="M7 2H14.5V6.5L8.5 12.5H1V8.5Z" fill="#c0c0c0"/><path d="M14.5 2V6.5L8.5 12.5H1" fill="none" stroke="#000" stroke-width="1.2"/><path d="M7 2H14.5M1 12.5V8.5M8.5 12.5V8.5" fill="none" stroke="#8b0000" stroke-width="1.2"/></g><g transform="translate(418,206)"><path d="M2 5L7 2L12 4V12L7 15L2 13Z" fill="#ffe600" stroke="#000" stroke-width="1.4"/><path d="M6.5 6.5L11 4.5V11.5L6.5 14Z" fill="#fff8b0" stroke="#000" stroke-width="1"/><path d="M2 5L6.5 6.5" stroke="#000" stroke-width="1.2"/></g><g transform="translate(360,226)"><rect x="1.5" y="4.5" width="13" height="7" fill="#c0c0c0" stroke="#8b1a1a"/></g><g transform="translate(379,246)"><rect x="1.5" y="4.5" width="13" height="7" fill="#c0c0c0" stroke="#8b1a1a"/></g><g transform="translate(379,266)"><rect x="1.5" y="4.5" width="13" height="7" fill="#c0c0c0" stroke="#8b1a1a"/></g><g transform="translate(360,286)"><path d="M3.5 1V13.5M3.5 13L11 4M4 13.5L15 13.5" stroke="#000" stroke-width="1.4" fill="none"/><path d="M1.5 3.5L3.5 0.5L5.5 3.5" fill="none" stroke="#000"/><circle cx="14.5" cy="13.5" r="1.2" fill="#000"/></g><g transform="translate(378,306)"><circle cx="6" cy="6" r="5" fill="#1030e0" stroke="#0018a0" stroke-width=".8"/><path d="M2.5 3.5C4 1.5 7 1.5 8.5 3C7 4.5 7.5 6 5.5 6.5S2.5 5.5 2.5 3.5ZM7 7.5C8.5 7 10.5 7.5 10 9C8.8 10.3 7 9.5 7 7.5Z" fill="#20d020"/><path d="M10 11.5L11.3 15.5L12.7 13L14.1 15.5L15.5 11.5" fill="none" stroke="#e00" stroke-width="1.4"/></g><g transform="translate(360,326)"><path d="M1 8L5 3.5H15.5L11.5 8Z M1 11L5 6.5H15.5L11.5 11Z M1 14L5 9.5H15.5L11.5 14Z" fill="#f4f4f4" stroke="#000" stroke-width="1"/></g><g transform="translate(360,346)"><path d="M1 10L7 3H15.5L9.5 10Z" fill="#e8d0d0" stroke="#8b1a1a"/><path d="M1 10V13.5H9.5V10M9.5 13.5L15.5 6.5V3" fill="#d0b0b0" stroke="#8b1a1a"/><path d="M3 9.5L8 3.5M5.5 9.5L10.5 3.5M8 9.5L13 3.5" stroke="#c00000" stroke-width="1.2"/></g></svg>
<div class="t" style="left:381px;top:105px;line-height:18px;letter-spacing:-0.068px;">Solids</div>
<div class="t" style="left:400px;top:125px;line-height:18px;letter-spacing:-0.253px;">vacuum</div>
<div class="t" style="left:419px;top:145px;line-height:18px;letter-spacing:0.185px;">air</div>
<div class="t" style="left:438px;top:165px;line-height:18px;letter-spacing:-0.157px;">CreateBox</div>
<div class="t" style="left:419px;top:185px;line-height:18px;transform:scaleX(0.9450);transform-origin:0 0;">Box1</div>
<div class="t" style="left:438px;top:205px;line-height:18px;letter-spacing:-0.157px;">CreateBox</div>
<div class="t" style="left:381px;top:225px;line-height:18px;transform:scaleX(0.9390);transform-origin:0 0;">Sheets</div>
<div class="t" style="left:400px;top:245px;line-height:18px;letter-spacing:0.052px;">Lumped Port</div>
<div class="t" style="left:400px;top:265px;line-height:18px;letter-spacing:-0.274px;">Perfect E</div>
<div class="t" style="left:381px;top:285px;line-height:18px;letter-spacing:-0.058px;">Coordinate Systems</div>
<div class="t" style="left:400px;top:305px;line-height:18px;letter-spacing:0.071px;">Global</div>
<div class="t" style="left:381px;top:325px;line-height:18px;transform:scaleX(0.9309);transform-origin:0 0;">Planes</div>
<div class="t" style="left:381px;top:345px;line-height:18px;transform:scaleX(0.9353);transform-origin:0 0;">Lists</div>
<div style="left:629px;top:101px;width:3px;height:760px;background:#f0f0f0;"></div>
<div style="left:0px;top:862px;width:1919px;height:8px;background:#f0f0f0;"></div>
<div style="left:0px;top:862px;width:1919px;height:3px;background:#f8f8f8;"></div>
<div style="left:0px;top:865px;width:1919px;height:2px;background:#707070;border-top:1px solid #c0c0c0;"></div>
<div style="left:2px;top:869px;width:14px;height:147px;border:1px solid #a0a0a0;border-radius:2px;"></div>
<svg style="left:2px;top:871px;" width="13" height="40" viewBox="0 0 13 40"><path d="M4 4l5 5M9 4l-5 5" stroke="#000" stroke-width="1.6"/><path d="M9 17.5L6 20.5L9 23.5Z" fill="#000"/></svg>
<div class="t" style="left:3px;top:926px;height:86px;width:12px;line-height:12px;font-size:10px;writing-mode:vertical-rl;transform:rotate(180deg);letter-spacing:-0.3px;">Message Manager</div>
<div style="left:17px;top:870px;width:937px;height:145px;border:1px solid #828790;background:#fff;"></div>
<div style="left:957px;top:867px;width:2px;height:150px;background:#fff;"></div>
<div style="left:961px;top:867px;width:2px;height:150px;background:#808080;border-left:1px solid #6d6d6d;"></div>
<div style="left:965px;top:869px;width:14px;height:147px;border:1px solid #a0a0a0;border-radius:2px;"></div>
<svg style="left:965px;top:871px;" width="13" height="40" viewBox="0 0 13 40"><path d="M4 4l5 5M9 4l-5 5" stroke="#000" stroke-width="1.6"/><path d="M9 17.5L6 20.5L9 23.5Z" fill="#000"/></svg>
<div class="t" style="left:967px;top:952px;height:60px;width:12px;line-height:12px;font-size:10px;writing-mode:vertical-rl;transform:rotate(180deg);letter-spacing:-0.3px;">Progress</div>
<div style="left:980px;top:870px;width:936px;height:144px;border:2px solid;border-color:#808080 #e3e3e3 #e3e3e3 #808080;background:#fff;"></div>
<div style="left:0px;top:1017px;width:1919px;height:1px;background:#a0a0a0;"></div>
<div class="t" style="left:1px;top:1022px;font-size:12px;line-height:18px;letter-spacing:0.163px;">Ready</div>
<div style="left:1814px;top:1022px;width:30px;height:17px;border:1px solid;border-color:#a0a0a0 #fff #fff #a0a0a0;"></div>
<div style="left:1845px;top:1022px;width:37px;height:17px;border:1px solid;border-color:#a0a0a0 #fff #fff #a0a0a0;"></div>
<div style="left:1884px;top:1022px;width:35px;height:17px;border:1px solid;border-color:#a0a0a0 #fff #fff #a0a0a0;"></div>
<div class="t" style="left:1847px;top:1022px;font-size:12px;line-height:18px;letter-spacing:0.891px;">NUM</div>
<div style="left:632px;top:102px;width:1287px;height:760px;border:2px solid;border-color:#696969 #e3e3e3 #e3e3e3 #696969;background:#fff;overflow:hidden;"></div>
<svg style="left:0px;top:0px;" width="1919" height="870" viewBox="0 0 1919 870"><defs><clipPath id="vc"><rect x="634" y="104" width="1283" height="756"/></clipPath></defs><g clip-path="url(#vc)"><path d="M633 -366.7L1917 90.8M633 -353.0L1917 104.4M633 -325.7L1917 131.7M633 -312.0L1917 145.3M633 -298.4L1917 159.0M633 -284.7L1917 172.6M633 -257.4L1917 199.9M633 -243.7L1917 213.5M633 -230.1L1917 227.1M633 -216.4L1917 240.8M633 -189.1L1917 268.0M633 -175.4L1917 281.7M633 -161.8L1917 295.3M633 -148.1L1917 308.9M633 -120.8L1917 336.2M633 -107.1L1917 349.8M633 -93.5L1917 363.5M633 -79.8L1917 377.1M633 -52.5L1917 404.4M633 -38.8L1917 418.0M633 -25.2L1917 431.6M633 -11.5L1917 445.2M633 15.8L1917 472.5M633 29.5L1917 486.1M633 43.1L1917 499.8M633 56.8L1917 513.4M633 84.1L1917 540.7M633 97.8L1917 554.3M633 111.4L1917 567.9M633 125.1L1917 581.6M633 152.4L1917 608.8M633 166.1L1917 622.5M633 179.7L1917 636.1M633 193.4L1917 649.7M633 220.7L1917 677.0M633 234.4L1917 690.6M633 248.0L1917 704.3M633 261.7L1917 717.9M633 289.0L1917 745.2M633 302.7L1917 758.8M633 316.3L1917 772.4M633 330.0L1917 786.0M633 357.3L1917 813.3M633 371.0L1917 826.9M633 384.6L1917 840.6M633 398.3L1917 854.2M633 425.6L1917 881.5M633 439.3L1917 895.1M633 452.9L1917 908.7M633 466.6L1917 922.4M633 493.9L1917 949.6M633 507.6L1917 963.3M633 521.2L1917 976.9M633 534.9L1917 990.5M633 562.2L1917 1017.8M633 575.9L1917 1031.4M633 589.5L1917 1045.1M633 603.2L1917 1058.7M633 630.5L1917 1086.0M633 644.2L1917 1099.6M633 657.8L1917 1113.2M633 671.5L1917 1126.8M633 698.8L1917 1154.1M633 712.5L1917 1167.7M633 726.1L1917 1181.4M633 739.8L1917 1195.0M633 767.1L1917 1222.3M633 780.8L1917 1235.9M633 794.4L1917 1249.5M633 808.1L1917 1263.2M633 835.4L1917 1290.4M633 849.1L1917 1304.1M633 862.7L1917 1317.7M650.2 100L-219.7 863M676.7 100L-193.6 863M729.7 100L-141.4 863M756.3 100L-115.3 863M782.8 100L-89.2 863M809.3 100L-63.1 863M862.3 100L-10.9 863M888.9 100L15.2 863M915.4 100L41.3 863M941.9 100L67.4 863M995.0 100L119.6 863M1021.5 100L145.7 863M1048.0 100L171.8 863M1074.5 100L197.9 863M1127.6 100L250.0 863M1154.1 100L276.1 863M1180.6 100L302.2 863M1207.1 100L328.3 863M1260.2 100L380.5 863M1286.7 100L406.6 863M1313.2 100L432.7 863M1339.8 100L458.8 863M1392.8 100L511.0 863M1419.3 100L537.1 863M1445.8 100L563.2 863M1472.4 100L589.3 863M1525.4 100L641.5 863M1551.9 100L667.6 863M1578.5 100L693.7 863M1605.0 100L719.8 863M1658.0 100L772.0 863M1684.5 100L798.1 863M1711.1 100L824.2 863M1737.6 100L850.3 863M1790.6 100L902.5 863M1817.2 100L928.6 863M1843.7 100L954.7 863M1870.2 100L980.8 863M1923.3 100L1033.0 863M1949.8 100L1059.1 863M1976.3 100L1085.2 863M2002.8 100L1111.3 863M2055.9 100L1163.5 863M2082.4 100L1189.5 863M2108.9 100L1215.6 863M2135.4 100L1241.7 863M2188.5 100L1293.9 863M2215.0 100L1320.0 863M2241.5 100L1346.1 863M2268.1 100L1372.2 863M2321.1 100L1424.4 863M2347.6 100L1450.5 863M2374.1 100L1476.6 863M2400.7 100L1502.7 863M2453.7 100L1554.9 863M2480.2 100L1581.0 863M2506.8 100L1607.1 863M2533.3 100L1633.2 863M2586.3 100L1685.4 863M2612.8 100L1711.5 863M2639.4 100L1737.6 863M2665.9 100L1763.7 863M2718.9 100L1815.9 863M2745.5 100L1842.0 863M2772.0 100L1868.1 863M2798.5 100L1894.2 863" stroke="#e3e3e3" stroke-width="1" fill="none"/><path d="M633 -339.3L1917 118.1M633 -271.0L1917 186.2M633 -202.8L1917 254.4M633 -134.4L1917 322.6M633 -66.1L1917 390.7M633 2.2L1917 458.9M633 70.5L1917 527.0M633 138.8L1917 595.2M633 207.1L1917 663.4M633 275.4L1917 731.5M633 343.6L1917 799.7M633 411.9L1917 867.8M633 480.2L1917 936.0M633 548.5L1917 1004.2M633 616.8L1917 1072.3M633 685.1L1917 1140.5M633 753.4L1917 1208.6M633 821.8L1917 1276.8M703.2 100L-167.5 863M835.8 100L-37.0 863M968.4 100L93.5 863M1101.0 100L224.0 863M1233.7 100L354.4 863M1366.3 100L484.9 863M1498.9 100L615.4 863M1631.5 100L745.9 863M1764.1 100L876.4 863M1896.7 100L1006.9 863M2029.3 100L1137.4 863M2162.0 100L1267.8 863M2294.6 100L1398.3 863M2427.2 100L1528.8 863M2559.8 100L1659.3 863M2692.4 100L1789.8 863M2825.0 100L1920.3 863" stroke="#dedede" stroke-width="1.9" fill="none"/><polygon points="913.5,103 1325,103 1595,200 1571,754.1 1446.4,862 724,862 671,844 671,309" fill="rgba(146,146,186,0.50)"/><polygon points="671,844 1017.6,555.7 1571,754.1 1446.4,862 724,862" fill="rgba(255,255,255,0.14)"/><g stroke="#1c1c6c" stroke-width="1.1" fill="none"><path d="M913.5 103L671 309V844L718 860"/><path d="M1325 103L1595 200L1571 754.1L1446.4 862"/><path d="M1595 200L1227 509L1240 862"/><path d="M1031.5 103L1017.6 555.7L671 844"/><path d="M1571 754.1L1307.2 660.5L1017.6 555.7"/></g><path d="M1148 527.1L1889.5 790.7" stroke="#0000f0" stroke-width="2"/><path d="M1911.5 798L1887.8 798L1888.5 790L1893.4 784.4Z" fill="#0000e8"/><path d="M1911.5 798L1887.8 798L1888 793Z" fill="#0000a8"/><path d="M1126 519L1150.3 149" stroke="#f00000" stroke-width="2"/><path d="M1150.6 126L1158.4 148L1154 149.5H1147L1142.8 148Z" fill="#e80000"/><path d="M765 829L769 826H777L778 831L775 835L768 837L765 836.5V840H763.5V838H761.5V840H759.5V835L758.8 831.5H761Z" fill="#007800"/><rect x="998.5" y="832.5" width="277" height="7" fill="#fff" stroke="#000"/><rect x="1275" y="832" width="277" height="8" fill="#000"/></g></svg>
<div class="t" style="left:1151px;top:114px;font-size:12px;line-height:14px;color:#f00000;font-weight:bold;">Z</div>
<div class="t" style="left:1909px;top:784px;font-size:12px;line-height:14px;color:#0000e0;font-weight:bold;">Y</div>
<div class="t" style="left:995px;top:844px;line-height:16px;">0</div>
<div class="t" style="left:1248px;top:844px;line-height:16px;letter-spacing:-0.135px;">2.5e+003</div>
<div class="t" style="left:1530px;top:844px;line-height:16px;letter-spacing:-0.151px;">5e+003 (mm)</div>
<div style="left:611px;top:204px;width:697px;height:624px;background:#f0f0f0;border:1px solid #1883d7;box-shadow:0 0 14px 2px rgba(0,0,0,0.32);"></div>
<div style="left:612px;top:205px;width:695px;height:30px;background:#fff;"></div>
<div class="t" style="left:620px;top:211px;line-height:18px;letter-spacing:-0.189px;">Edit Frequency Sweep</div>
<svg style="left:1285px;top:212px;" width="14" height="14" viewBox="0 0 14 14"><path d="M1.5 1.5l11 11M12.5 1.5l-11 11" stroke="#000" stroke-width="1.2"/></svg>
<div style="left:619px;top:268px;width:688px;height:522px;border-top:1px solid #fff;border-left:1px solid #fff;"></div>
<div style="left:619px;top:788px;width:688px;height:3px;border-top:1px solid #a0a0a0;border-bottom:1px solid #fff;background:#696969;"></div>
<div style="left:680px;top:247px;width:57px;height:22px;border:1px solid;border-color:#fff #696969 transparent #fff;border-radius:2px 2px 0 0;"></div>
<div style="left:735px;top:249px;width:1px;height:19px;background:#a0a0a0;"></div>
<div style="left:620px;top:244px;width:60px;height:26px;border:1px solid;border-color:#fff #696969 transparent #fff;border-radius:2px 2px 0 0;background:#f0f0f0;"></div>
<div style="left:678px;top:246px;width:1px;height:23px;background:#a0a0a0;"></div>
<div class="t" style="left:627px;top:247px;line-height:18px;letter-spacing:-0.178px;">General</div>
<div class="t" style="left:684px;top:249px;line-height:18px;letter-spacing:-0.086px;">Defaults</div>
<div class="t" style="left:635px;top:287px;line-height:18px;letter-spacing:-0.059px;">Sweep Name:</div>
<div style="left:739px;top:283px;width:295px;height:25px;border:1px solid;border-color:#a0a0a0 #fff #fff #a0a0a0;background:#fff;"></div>
<div style="left:740px;top:284px;width:293px;height:23px;border:1px solid;border-color:#696969 #e3e3e3 #e3e3e3 #696969;background:#fff;"></div>
<div class="t" style="left:743px;top:286px;line-height:18px;letter-spacing:-0.350px;">Sweep</div>
<div style="left:1220px;top:291px;width:13px;height:13px;border:1px solid;border-color:#a0a0a0 #fff #fff #a0a0a0;background:#fff;"></div>
<div style="left:1221px;top:292px;width:11px;height:11px;border:1px solid;border-color:#696969 #e3e3e3 #e3e3e3 #696969;background:#fff;"></div>
<svg style="left:1220px;top:291px;" width="13" height="13" viewBox="0 0 13 13"><path d="M3.2 6.2l2.3 2.6L10 3.8" stroke="#000" stroke-width="2" fill="none"/></svg>
<div class="t" style="left:1238px;top:289px;line-height:18px;letter-spacing:-0.101px;">Enabled</div>
<div class="t" style="left:635px;top:331px;line-height:18px;letter-spacing:-0.083px;">Sweep Type:</div>
<div style="left:739px;top:327px;width:162px;height:24px;border:1px solid;border-color:#a0a0a0 #fff #fff #a0a0a0;background:#fff;"></div>
<div style="left:740px;top:328px;width:160px;height:22px;border:1px solid;border-color:#696969 #e3e3e3 #e3e3e3 #696969;background:#fff;"></div>
<div style="left:882px;top:329px;width:17px;height:20px;border:1px solid;border-color:#e3e3e3 #696969 #696969 #e3e3e3;background:#f0f0f0;"></div>
<div style="left:883px;top:330px;width:15px;height:18px;border:1px solid;border-color:#fff #a0a0a0 #a0a0a0 #fff;background:#f0f0f0;"></div>
<svg style="left:882px;top:329px;" width="17" height="20" viewBox="0 0 17 20"><path d="M5 9h7l-3.5 4z" fill="#000"/></svg>
<div class="t" style="left:743px;top:331px;line-height:18px;transform:scaleX(0.9098);transform-origin:0 0;">Fast</div>
<div style="left:729px;top:314px;width:186px;height:52px;border:5px solid #e81c24;"></div>
<div style="left:638px;top:383px;width:260px;height:227px;border:1px solid #fff;"></div>
<div style="left:637px;top:382px;width:260px;height:227px;border:1px solid #a0a0a0;"></div>
<div style="left:643px;top:375px;width:102px;height:16px;background:#f0f0f0;"></div>
<div class="t" style="left:646px;top:374px;line-height:18px;letter-spacing:-0.200px;">Frequency Setup</div>
<div class="t" style="left:653px;top:406px;line-height:18px;letter-spacing:0.041px;">Type:</div>
<div style="left:739px;top:402px;width:150px;height:24px;border:1px solid;border-color:#a0a0a0 #fff #fff #a0a0a0;background:#fff;"></div>
<div style="left:740px;top:403px;width:148px;height:22px;border:1px solid;border-color:#696969 #e3e3e3 #e3e3e3 #696969;background:#fff;"></div>
<div style="left:870px;top:404px;width:17px;height:20px;border:1px solid;border-color:#e3e3e3 #696969 #696969 #e3e3e3;background:#f0f0f0;"></div>
<div style="left:871px;top:405px;width:15px;height:18px;border:1px solid;border-color:#fff #a0a0a0 #a0a0a0 #fff;background:#f0f0f0;"></div>
<svg style="left:870px;top:404px;" width="17" height="20" viewBox="0 0 17 20"><path d="M5 9h7l-3.5 4z" fill="#000"/></svg>
<div class="t" style="left:743px;top:406px;line-height:18px;letter-spacing:-0.188px;">LinearStep</div>
<div class="t" style="left:653px;top:446px;line-height:18px;letter-spacing:0.110px;">Start</div>
<div style="left:739px;top:442px;width:72px;height:25px;border:1px solid;border-color:#a0a0a0 #fff #fff #a0a0a0;background:#fff;"></div>
<div style="left:740px;top:443px;width:70px;height:23px;border:1px solid;border-color:#696969 #e3e3e3 #e3e3e3 #696969;background:#fff;"></div>
<div class="t" style="left:743px;top:445px;line-height:18px;transform:scaleX(0.9408);transform-origin:0 0;">0.8</div>
<div style="left:817px;top:442px;width:71px;height:24px;border:1px solid;border-color:#a0a0a0 #fff #fff #a0a0a0;background:#fff;"></div>
<div style="left:818px;top:443px;width:69px;height:22px;border:1px solid;border-color:#696969 #e3e3e3 #e3e3e3 #696969;background:#fff;"></div>
<div style="left:869px;top:444px;width:17px;height:20px;border:1px solid;border-color:#e3e3e3 #696969 #696969 #e3e3e3;background:#f0f0f0;"></div>
<div style="left:870px;top:445px;width:15px;height:18px;border:1px solid;border-color:#fff #a0a0a0 #a0a0a0 #fff;background:#f0f0f0;"></div>
<svg style="left:869px;top:444px;" width="17" height="20" viewBox="0 0 17 20"><path d="M5 9h7l-3.5 4z" fill="#000"/></svg>
<div class="t" style="left:821px;top:446px;line-height:18px;letter-spacing:-0.333px;">GHz</div>
<div class="t" style="left:651px;top:484px;line-height:18px;letter-spacing:0.065px;">Stop</div>
<div style="left:739px;top:480px;width:72px;height:25px;border:1px solid;border-color:#a0a0a0 #fff #fff #a0a0a0;background:#fff;"></div>
<div style="left:740px;top:481px;width:70px;height:23px;border:1px solid;border-color:#696969 #e3e3e3 #e3e3e3 #696969;background:#fff;"></div>
<div class="t" style="left:743px;top:483px;line-height:18px;transform:scaleX(0.9408);transform-origin:0 0;">1.2</div>
<div style="left:817px;top:480px;width:71px;height:24px;border:1px solid;border-color:#a0a0a0 #fff #fff #a0a0a0;background:#fff;"></div>
<div style="left:818px;top:481px;width:69px;height:22px;border:1px solid;border-color:#696969 #e3e3e3 #e3e3e3 #696969;background:#fff;"></div>
<div style="left:869px;top:482px;width:17px;height:20px;border:1px solid;border-color:#e3e3e3 #696969 #696969 #e3e3e3;background:#f0f0f0;"></div>
<div style="left:870px;top:483px;width:15px;height:18px;border:1px solid;border-color:#fff #a0a0a0 #a0a0a0 #fff;background:#f0f0f0;"></div>
<svg style="left:869px;top:482px;" width="17" height="20" viewBox="0 0 17 20"><path d="M5 9h7l-3.5 4z" fill="#000"/></svg>
<div class="t" style="left:821px;top:484px;line-height:18px;letter-spacing:-0.333px;">GHz</div>
<div class="t" style="left:653px;top:523px;line-height:18px;letter-spacing:-0.294px;">Step Size</div>
<div style="left:739px;top:519px;width:72px;height:25px;border:1px solid;border-color:#a0a0a0 #fff #fff #a0a0a0;background:#fff;"></div>
<div style="left:740px;top:520px;width:70px;height:23px;border:1px solid;border-color:#696969 #e3e3e3 #e3e3e3 #696969;background:#fff;"></div>
<div class="t" style="left:743px;top:522px;line-height:18px;letter-spacing:-0.229px;">100</div>
<div style="left:817px;top:519px;width:71px;height:24px;border:1px solid;border-color:#a0a0a0 #fff #fff #a0a0a0;background:#fff;"></div>
<div style="left:818px;top:520px;width:69px;height:22px;border:1px solid;border-color:#696969 #e3e3e3 #e3e3e3 #696969;background:#fff;"></div>
<div style="left:869px;top:521px;width:17px;height:20px;border:1px solid;border-color:#e3e3e3 #696969 #696969 #e3e3e3;background:#f0f0f0;"></div>
<div style="left:870px;top:522px;width:15px;height:18px;border:1px solid;border-color:#fff #a0a0a0 #a0a0a0 #fff;background:#f0f0f0;"></div>
<svg style="left:869px;top:521px;" width="17" height="20" viewBox="0 0 17 20"><path d="M5 9h7l-3.5 4z" fill="#000"/></svg>
<div class="t" style="left:821px;top:523px;line-height:18px;letter-spacing:0.094px;">MHz</div>
<div style="left:727px;top:431px;width:173px;height:124px;border:5px solid #e81c24;"></div>
<div style="left:676px;top:563px;width:191px;height:30px;border:1px solid;border-color:#fff #696969 #696969 #fff;background:#f0f0f0;"></div>
<div style="left:677px;top:564px;width:189px;height:28px;border:1px solid;border-color:#e3e3e3 #a0a0a0 #a0a0a0 #e3e3e3;"></div>
<div class="t" style="left:676px;top:569px;line-height:18px;width:191px;text-align:center;letter-spacing:-0.1px;">Time Domain Calculation...</div>
<div style="left:925px;top:443px;width:87px;height:28px;border:1px solid;border-color:#fff #696969 #696969 #fff;background:#f0f0f0;"></div>
<div style="left:926px;top:444px;width:85px;height:26px;border:1px solid;border-color:#e3e3e3 #a0a0a0 #a0a0a0 #e3e3e3;"></div>
<div style="left:924px;top:442px;width:89px;height:30px;border:1px solid #606060;"></div>
<div style="left:929px;top:447px;width:79px;height:20px;border:1px dotted #000;"></div>
<div class="t" style="left:925px;top:449px;line-height:18px;width:87px;text-align:center;letter-spacing:0.3px;">Display &gt;&gt;</div>
<div style="left:920px;top:434px;width:99px;height:46px;border:5px solid #e81c24;"></div>
<div style="left:1036px;top:385px;width:254px;height:380px;border:1px solid;border-color:#696969 #a0a0a0 #a0a0a0 #696969;background:#fff;"></div>
<div style="left:1037px;top:386px;width:19px;height:20px;background:#f0f0f0;border:1px solid;border-color:#fff #696969 #696969 #fff;"></div>
<div style="left:1038px;top:387px;width:17px;height:18px;border:1px solid;border-color:transparent #a0a0a0 #a0a0a0 transparent;"></div>
<div style="left:1056px;top:386px;width:99px;height:20px;background:#f0f0f0;border:1px solid;border-color:#fff #696969 #696969 #fff;"></div>
<div style="left:1057px;top:387px;width:97px;height:18px;border:1px solid;border-color:transparent #a0a0a0 #a0a0a0 transparent;"></div>
<div style="left:1155px;top:386px;width:134px;height:20px;background:#f0f0f0;border:1px solid;border-color:#fff #696969 #696969 #fff;"></div>
<div style="left:1156px;top:387px;width:132px;height:18px;border:1px solid;border-color:transparent #a0a0a0 #a0a0a0 transparent;"></div>
<div class="t" style="left:1102px;top:388px;line-height:18px;">#</div>
<div class="t" style="left:1192px;top:388px;line-height:18px;letter-spacing:-0.268px;">Frequency</div>
<div style="left:1037px;top:406px;width:20px;height:20px;background:#f0f0f0;border:1px solid;border-color:#fff #696969 #696969 #fff;"></div>
<div style="left:1038px;top:407px;width:18px;height:18px;border:1px solid;border-color:transparent #a0a0a0 #a0a0a0 transparent;"></div>
<div style="left:1037px;top:426px;width:20px;height:20px;background:#f0f0f0;border:1px solid;border-color:#fff #696969 #696969 #fff;"></div>
<div style="left:1038px;top:427px;width:18px;height:18px;border:1px solid;border-color:transparent #a0a0a0 #a0a0a0 transparent;"></div>
<div style="left:1037px;top:446px;width:20px;height:20px;background:#f0f0f0;border:1px solid;border-color:#fff #696969 #696969 #fff;"></div>
<div style="left:1038px;top:447px;width:18px;height:18px;border:1px solid;border-color:transparent #a0a0a0 #a0a0a0 transparent;"></div>
<div style="left:1037px;top:466px;width:20px;height:20px;background:#f0f0f0;border:1px solid;border-color:#fff #696969 #696969 #fff;"></div>
<div style="left:1038px;top:467px;width:18px;height:18px;border:1px solid;border-color:transparent #a0a0a0 #a0a0a0 transparent;"></div>
<div style="left:1037px;top:486px;width:20px;height:20px;background:#f0f0f0;border:1px solid;border-color:#fff #696969 #696969 #fff;"></div>
<div style="left:1038px;top:487px;width:18px;height:18px;border:1px solid;border-color:transparent #a0a0a0 #a0a0a0 transparent;"></div>
<svg style="left:0px;top:0px;" width="1300" height="520" viewBox="0 0 1300 520"><path d="M1056 425.5H1289" stroke="#c0c0c0"/><path d="M1056 445.5H1289" stroke="#c0c0c0"/><path d="M1056 465.5H1289" stroke="#c0c0c0"/><path d="M1056 485.5H1289" stroke="#c0c0c0"/><path d="M1056 505.5H1289" stroke="#c0c0c0"/><path d="M1155.5 406V505" stroke="#c0c0c0"/></svg>
<div class="t" style="left:1059px;top:408px;line-height:18px;">1</div>
<div class="t" style="left:1158px;top:408px;line-height:18px;letter-spacing:-0.345px;">0.8GHz</div>
<div class="t" style="left:1059px;top:428px;line-height:18px;">2</div>
<div class="t" style="left:1158px;top:428px;line-height:18px;letter-spacing:-0.345px;">0.9GHz</div>
<div class="t" style="left:1059px;top:448px;line-height:18px;">3</div>
<div class="t" style="left:1158px;top:448px;line-height:18px;transform:scaleX(0.9329);transform-origin:0 0;">1GHz</div>
<div class="t" style="left:1059px;top:468px;line-height:18px;">4</div>
<div class="t" style="left:1158px;top:468px;line-height:18px;letter-spacing:-0.345px;">1.1GHz</div>
<div class="t" style="left:1059px;top:488px;line-height:18px;">5</div>
<div class="t" style="left:1158px;top:488px;line-height:18px;letter-spacing:-0.345px;">1.2GHz</div>
<div style="left:640px;top:638px;width:258px;height:127px;border:1px solid #fff;"></div>
<div style="left:639px;top:637px;width:258px;height:127px;border:1px solid #a0a0a0;"></div>
<div style="left:645px;top:630px;width:140px;height:16px;background:#f0f0f0;"></div>
<div class="t" style="left:648px;top:629px;line-height:18px;letter-spacing:-0.116px;">3D Fields Save Options</div>
<div style="left:651px;top:659px;width:13px;height:13px;border:1px solid;border-color:#a0a0a0 #fff #fff #a0a0a0;background:#fff;"></div>
<div style="left:652px;top:660px;width:11px;height:11px;border:1px solid;border-color:#696969 #e3e3e3 #e3e3e3 #696969;background:#fff;"></div>
<svg style="left:651px;top:659px;" width="13" height="13" viewBox="0 0 13 13"><path d="M3.2 6.2l2.3 2.6L10 3.8" stroke="#000" stroke-width="2" fill="none"/></svg>
<div class="t" style="left:669px;top:657px;line-height:18px;transform:scaleX(0.9423);transform-origin:0 0;">Save Fields</div>
<div style="left:676px;top:688px;width:13px;height:13px;border:1px solid;border-color:#a0a0a0 #fff #fff #a0a0a0;background:#fff;"></div>
<div style="left:677px;top:689px;width:11px;height:11px;border:1px solid;border-color:#696969 #e3e3e3 #e3e3e3 #696969;background:#fff;"></div>
<div class="t" style="left:694px;top:686px;line-height:18px;letter-spacing:0.055px;">Save radiated fields only</div>
<div style="left:676px;top:721px;width:13px;height:13px;border:1px solid;border-color:#a0a0a0 #fff #fff #a0a0a0;background:#fff;"></div>
<div style="left:677px;top:722px;width:11px;height:11px;border:1px solid;border-color:#696969 #e3e3e3 #e3e3e3 #696969;background:#fff;"></div>
<div class="t" style="left:694px;top:710px;line-height:18px;letter-spacing:0.018px;">Generate fields at solve</div>
<div class="t" style="left:694px;top:727px;line-height:18px;letter-spacing:-0.110px;">time (All Frequencies)</div>
<div style="left:939px;top:798px;width:88px;height:30px;border:1px solid;border-color:#fff #696969 #696969 #fff;background:#f0f0f0;"></div>
<div style="left:940px;top:799px;width:86px;height:28px;border:1px solid;border-color:#e3e3e3 #a0a0a0 #a0a0a0 #e3e3e3;"></div>
<div class="t" style="left:939px;top:804px;font-size:12px;line-height:18px;width:88px;text-align:center;">确定</div>
<div style="left:1034px;top:798px;width:88px;height:30px;border:1px solid;border-color:#fff #696969 #696969 #fff;background:#f0f0f0;"></div>
<div style="left:1035px;top:799px;width:86px;height:28px;border:1px solid;border-color:#e3e3e3 #a0a0a0 #a0a0a0 #e3e3e3;"></div>
<div class="t" style="left:1034px;top:804px;font-size:12px;line-height:18px;width:88px;text-align:center;">取消</div>
<div style="left:611px;top:827px;width:697px;height:1px;background:#1883d7;"></div>
</body></html>
